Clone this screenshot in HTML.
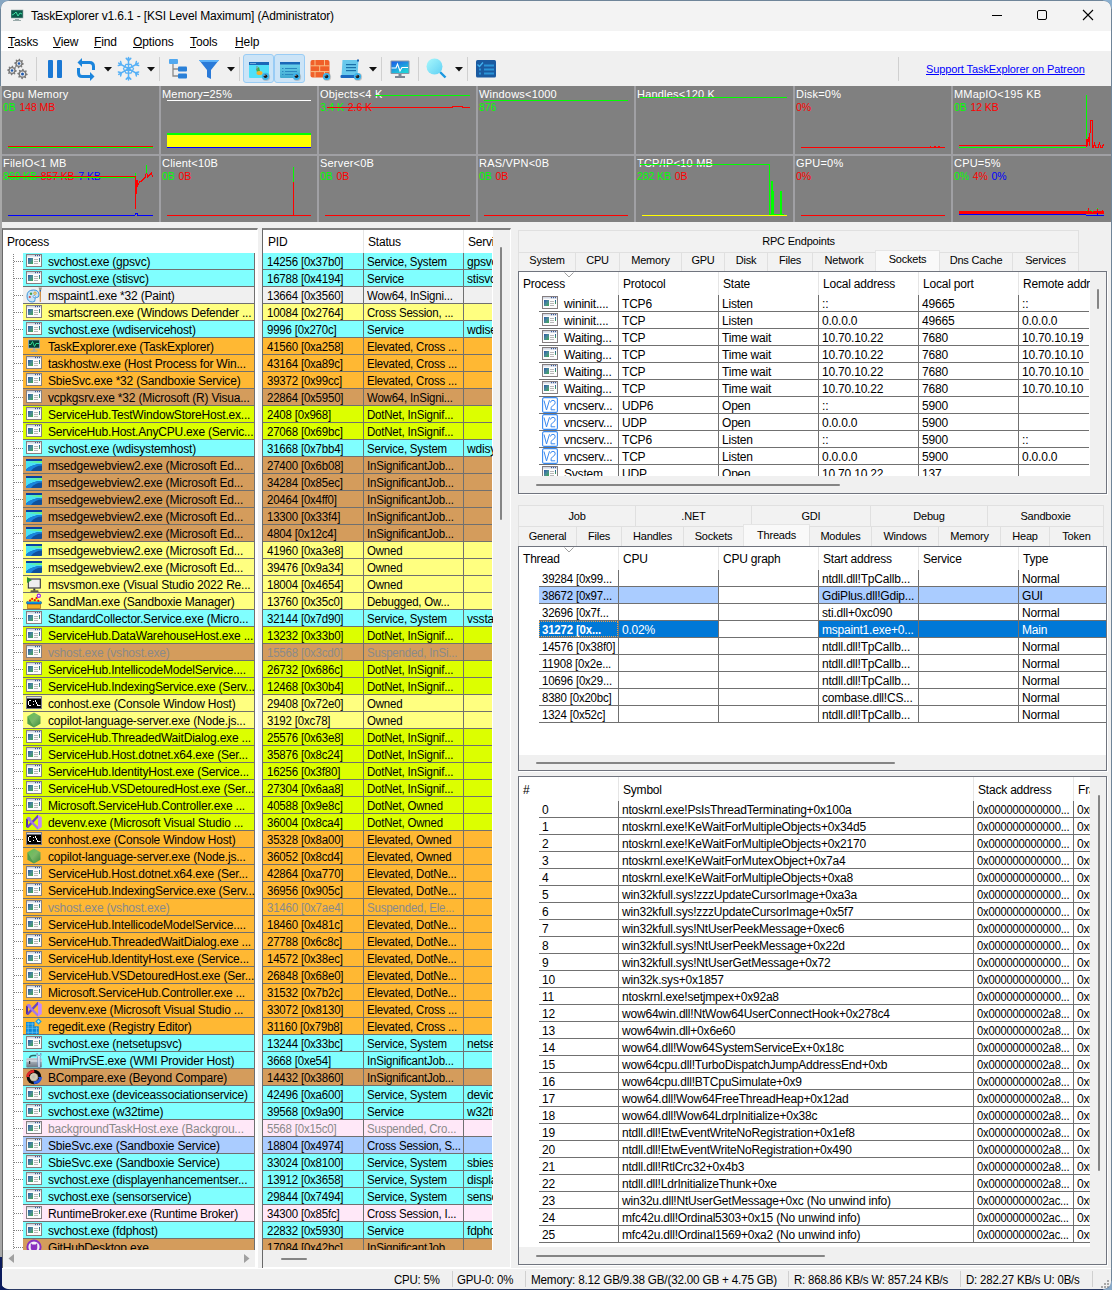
<!DOCTYPE html><html><head><meta charset="utf-8"><style>
*{box-sizing:border-box;margin:0;padding:0}
html,body{width:1112px;height:1290px;overflow:hidden;background:#f0f0f0;font-family:"Liberation Sans",sans-serif;font-size:12px;letter-spacing:-0.2px;color:#000}
.a{position:absolute}
.t{position:absolute;white-space:nowrap;line-height:18px}
.row{position:absolute;height:17px;border-bottom:1px solid #707070;overflow:hidden}
.cell{position:absolute;top:0;height:16px;line-height:16px;white-space:nowrap;overflow:hidden;padding-left:4px}
.gl{position:absolute;top:0;width:1px;height:17px;background:#707070}
.hdr{position:absolute;line-height:16px;white-space:nowrap}
.gray{color:#8a8a8a}
.gc{position:absolute;background:#808080;overflow:hidden}
.gt{position:absolute;left:1px;top:2px;color:#fff;font-size:11px;letter-spacing:0.2px;line-height:13px;white-space:nowrap}
.gv{position:absolute;left:1px;top:15px;font-size:10.5px;letter-spacing:-0.1px;line-height:13px;white-space:nowrap}
.tab{position:absolute;height:19px;background:#f2f2f2;border:1px solid #e0e0e0;border-bottom:none;text-align:center;line-height:18px;white-space:nowrap;font-size:11px;letter-spacing:-0.2px}
.tab.sel{background:#f9f9f9;border-color:#e5e5e5;height:21px}
.frame{position:absolute;background:#fff;border:1px solid #70747e;box-shadow:1px 1px 0 #fff;overflow:hidden}
.sb{position:absolute;background:#f0f0f0}
.thumb{position:absolute;background:#858585;border-radius:1px}
u{text-decoration:underline}
.sx{transform:scaleX(0.955);transform-origin:0 0}
.sx9{transform:scaleX(0.93);transform-origin:0 0}
</style></head><body>
<svg width="0" height="0" style="position:absolute"><defs>
<linearGradient id="gapp" x1="0" y1="0" x2="1" y2="1"><stop offset="0" stop-color="#2a58a8"/><stop offset="0.5" stop-color="#4a8a98"/><stop offset="1" stop-color="#40a850"/></linearGradient><linearGradient id="gbar" x1="0" y1="0" x2="0" y2="1"><stop offset="0" stop-color="#2a58a8"/><stop offset="1" stop-color="#40a850"/></linearGradient>
<symbol id="i-app" viewBox="0 0 16 13"><rect x="0.5" y="0.5" width="15" height="12" fill="#fcfcfc" stroke="#857e80"/><rect x="1" y="1" width="14" height="1.6" fill="#d4dae4"/><rect x="11" y="1" width="1" height="1.2" fill="#3a5a9a"/><rect x="13" y="1" width="1" height="1.2" fill="#3a5a9a"/><rect x="9" y="1" width="1" height="1.2" fill="#3a5a9a"/><rect x="2" y="4" width="5" height="6" fill="url(#gapp)"/><rect x="8" y="5" width="4" height="1" fill="#b8b8b8"/><rect x="8" y="7" width="4" height="1" fill="#b8b8b8"/><rect x="8" y="9" width="4" height="1" fill="#b8b8b8"/><rect x="13" y="4" width="1" height="4" fill="url(#gbar)"/></symbol>
<symbol id="i-tex" viewBox="0 0 16 16"><rect x="2" y="1.5" width="12" height="9" rx="0.6" fill="#a8b8c8"/><rect x="2.8" y="2.3" width="10.4" height="7.4" fill="#083f33"/><polyline points="3,6.5 5,6.5 6.5,3.5 8.5,8.5 10,5.5 13,5.5" fill="none" stroke="#30d890" stroke-width="1"/><rect x="7" y="10.5" width="2" height="2" fill="#9aaab8"/><rect x="4.5" y="12.5" width="7" height="1.2" fill="#9aaab8"/></symbol>
<symbol id="i-paint" viewBox="0 0 16 16"><path d="M7.5 3 Q13 3 13 8 Q13 10.5 10.5 10.5 Q8.5 10.5 9 12.5 Q9.5 15 6.5 15 Q1 15 1 9 Q1 3 7.5 3 Z" fill="#c8e4f8" stroke="#3a94dc" stroke-width="1"/><circle cx="5" cy="6.8" r="1.2" fill="#40a050"/><circle cx="9" cy="6.2" r="1.2" fill="none" stroke="#e0a020" stroke-width="0.9"/><circle cx="3.8" cy="10" r="1.1" fill="#d04848"/><circle cx="8.2" cy="9.6" r="1.1" fill="#fff" stroke="#2a80d0" stroke-width="0.6"/><path d="M13.6 4 L15 4 L14.8 15 L13.8 15 Z" fill="#d08838"/><path d="M12.5 0.5 L16 0.5 L15 3.5 L13.5 3.5 Z" fill="#9a9888"/><rect x="13.6" y="3" width="1.4" height="1.5" fill="#2a6ab0"/></symbol>
<linearGradient id="gedge" x1="0" y1="0" x2="1" y2="0"><stop offset="0" stop-color="#40e8fc"/><stop offset="1" stop-color="#70f070"/></linearGradient>
<symbol id="i-edge" viewBox="0 0 16 16"><rect x="0" y="2" width="16" height="12" rx="0.8" fill="#10509c"/><rect x="0" y="2" width="16" height="2" fill="#0a40a0"/><rect x="0" y="4" width="16" height="2" fill="url(#gedge)"/><path d="M0 6 L16 6 L16 7 Q6 7 0 12.5 Z" fill="#48e0f6"/><path d="M0 12.5 Q6 7 16 7 L16 8.5 Q9 8.5 5 14 L0 14 Z" fill="#1a84dc"/></symbol>
<symbol id="i-vsmon" viewBox="0 0 16 16"><rect x="1.5" y="2" width="13.5" height="10.5" fill="#fff"/><rect x="2.3" y="3" width="12" height="9" fill="#eeeef0" stroke="#303030" stroke-width="1.1"/><rect x="7.3" y="12.5" width="2" height="2" fill="#383838"/><rect x="4.5" y="14.5" width="8" height="1.2" rx="0.5" fill="#303030"/><path d="M1 1 L6 4 L1 7 Z" fill="#2a9030"/></symbol>
<symbol id="i-sandman" viewBox="0 0 16 16"><rect x="1.5" y="10.8" width="13" height="4.8" fill="#f8b020" stroke="#a86a20" stroke-width="0.7"/><rect x="0.5" y="8.6" width="15" height="2.3" rx="1" fill="#0a9ae8" stroke="#0a3a90" stroke-width="0.6"/><path d="M2 8.6 L5 5 L8 6.5 L11 4 L14 8.6 Z" fill="#f0f020"/><g fill="#f01010"><circle cx="4" cy="7.6" r="1.1"/><circle cx="6.2" cy="5.8" r="1.1"/><circle cx="8.8" cy="7.2" r="1.1"/><circle cx="10.5" cy="5" r="1.1"/><circle cx="12.3" cy="7.8" r="1.1"/></g><circle cx="12.8" cy="2.8" r="1.6" fill="#fff" stroke="#a020f0" stroke-width="1.2"/></symbol>
<symbol id="i-con" viewBox="0 0 16 16"><rect x="0.5" y="1.5" width="15" height="12" fill="#000" stroke="#7a7a8a"/><rect x="1" y="2" width="14" height="1.5" fill="#d8dce4"/><g fill="#fff"><rect x="2" y="6" width="1" height="4"/><rect x="3" y="5" width="2" height="1"/><rect x="3" y="10" width="2" height="1"/><rect x="7" y="6" width="1" height="1"/><rect x="7" y="9" width="1" height="1"/><rect x="9" y="5" width="1" height="2"/><rect x="10" y="7" width="1" height="2"/><rect x="11" y="9" width="1" height="2"/><rect x="12" y="10" width="2.5" height="1"/></g></symbol>
<linearGradient id="gnode" x1="0" y1="0" x2="1" y2="1"><stop offset="0" stop-color="#60c050"/><stop offset="0.5" stop-color="#7ab868"/><stop offset="1" stop-color="#3a8a3a"/></linearGradient>
<symbol id="i-node" viewBox="0 0 16 16"><path d="M8 0.5 L14.5 4.2 L14.5 11.8 L8 15.5 L1.5 11.8 L1.5 4.2 Z" fill="url(#gnode)"/><path d="M1.5 4.2 L8 15.5 L1.5 11.8 Z" fill="#3a8a3a" opacity="0.6"/></symbol>
<symbol id="i-vs" viewBox="0 0 16 16"><path d="M0 5 L2 4 L2 14 L0 13 Z" fill="#5030a0"/><path d="M1.5 13.2 L12.5 1.5" stroke="#6a44c4" stroke-width="2.4"/><path d="M2 4.5 L12.5 15" stroke="#a478e8" stroke-width="2.4"/><path d="M1 4.2 L3 3.6 L5 5.5" stroke="#a478e8" stroke-width="1.6" fill="none"/><path d="M12 0.8 L15.8 3.2 L15.8 13 L12 15.6 Z" fill="#c488fa"/></symbol>
<symbol id="i-reg" viewBox="0 0 16 16"><g fill="#0a88d8"><rect x="0" y="4" width="8.5" height="4.3"/><rect x="0" y="8.3" width="12.8" height="8"/></g><g stroke="#70c8f8" stroke-width="0.7" fill="none"><path d="M0.5 6 L8 6 M0.5 10.3 L12.3 10.3 M0.5 14.3 L12.3 14.3 M2.2 4.5 L2.2 15.8 M6.3 4.5 L6.3 15.8 M10.5 8.8 L10.5 15.8"/></g><path d="M12.5 0.3 L15.7 3.5 L12.5 6.7 L9.3 3.5 Z" fill="#1aa0e8"/><path d="M12.5 2 L14 3.5 L12.5 5 L11 3.5 Z" fill="#a0e8ff"/></symbol>
<linearGradient id="gwmi" x1="0" y1="0" x2="0" y2="1"><stop offset="0" stop-color="#c8d0d8"/><stop offset="1" stop-color="#6a7480"/></linearGradient>
<symbol id="i-wmi" viewBox="0 0 16 16"><path d="M3.5 6 Q4 3.5 7 3.5 L10 3.5" stroke="#2a6a6a" stroke-width="1.3" fill="none"/><rect x="0.3" y="6" width="15.5" height="9.5" rx="1" fill="url(#gwmi)"/><rect x="0.3" y="8.5" width="15.5" height="1" fill="#e8eef4"/><rect x="3" y="9" width="1.2" height="3" fill="#333"/><path d="M11 1 Q10 3 11.5 5 L12 15.5 L14 15.5 L14.2 5 Q15.8 3 14.8 1 L14 3.5 L12 3.5 Z" fill="#dfe8f4" stroke="#5070a8" stroke-width="0.5"/></symbol>
<radialGradient id="gbc" cx="0.45" cy="0.45" r="0.6"><stop offset="0" stop-color="#b8b8b0"/><stop offset="0.6" stop-color="#d8d0b8"/><stop offset="1" stop-color="#807868"/></radialGradient>
<symbol id="i-bc" viewBox="0 0 16 16"><circle cx="8" cy="8" r="7.3" fill="#0a0a0a"/><circle cx="8" cy="8.3" r="4.3" fill="url(#gbc)"/><path d="M0.5 5.5 Q2.5 1 8 1 L8.5 3.5 Q4.5 3.5 3 6.5 L4 8 L0 8 Z" fill="#e02828"/><path d="M15.5 10.5 Q13.5 15 8 15 L7.5 12.5 Q11.5 12.5 13 9.5 L12 8 L16 8 Z" fill="#2858e0"/></symbol>
<symbol id="i-gh" viewBox="0 0 16 16"><circle cx="8" cy="8" r="7.6" fill="#8a30c0"/><circle cx="8" cy="8" r="5.6" fill="#f4f0f8"/><path d="M4.8 4 L6.3 5.6 L9.7 5.6 L11.2 4 L11.3 8.5 Q11.3 11.8 8 11.8 Q4.7 11.8 4.7 8.5 Z" fill="#8a30c0"/></symbol>
<symbol id="i-vnc" viewBox="0 0 16 16"><rect x="0.6" y="0.6" width="14.8" height="14.8" rx="1.5" fill="#fff" stroke="#3a8af0" stroke-width="1.1"/><path d="M2 3.5 L4.5 13 L7.5 3.2 M8.5 5.5 Q8.8 3.3 11 3.3 Q13.2 3.3 13.2 5.8 Q13.2 7.5 10.5 8.8 Q8.8 9.8 9 12.8 L13.2 12.8" fill="none" stroke="#3a8af0" stroke-width="1"/></symbol>
</defs></svg>
<div class="a" style="left:0;top:0;width:1112px;height:31px;background:#f3f3f3"></div>
<div class="a" style="left:0;top:31px;width:1112px;height:20px;background:#fff"></div>
<svg class="a" style="left:11px;top:9px" width="13" height="13" viewBox="0 0 13 13"><rect x="0" y="1" width="12" height="8" fill="#0c5a4a" stroke="#9aa" stroke-width="0.6"/><polyline points="1,6 3,5 5,3 7,7 9,4 11,5" fill="none" stroke="#40e0a0" stroke-width="1"/><rect x="4" y="10" width="4" height="1" fill="#9aa"/><rect x="2" y="11" width="8" height="1" fill="#9aa"/></svg>
<div class="t" style="left:31px;top:7px;font-size:12px;letter-spacing:-0.15px">TaskExplorer v1.6.1 - [KSI Level Maximum] (Administrator)</div>
<div class="a" style="left:992px;top:15px;width:10px;height:1px;background:#000"></div>
<div class="a" style="left:1037px;top:10px;width:10px;height:10px;border:1px solid #000;border-radius:2px"></div>
<svg class="a" style="left:1082px;top:9px" width="12" height="12"><path d="M1 1 L11 11 M11 1 L1 11" stroke="#000" stroke-width="1.1"/></svg>
<div class="t" style="left:8px;top:33px;font-size:12px;letter-spacing:-0.1px"><u>T</u>asks</div>
<div class="t" style="left:53px;top:33px;font-size:12px;letter-spacing:-0.1px"><u>V</u>iew</div>
<div class="t" style="left:94px;top:33px;font-size:12px;letter-spacing:-0.1px"><u>F</u>ind</div>
<div class="t" style="left:133px;top:33px;font-size:12px;letter-spacing:-0.1px"><u>O</u>ptions</div>
<div class="t" style="left:190px;top:33px;font-size:12px;letter-spacing:-0.1px"><u>T</u>ools</div>
<div class="t" style="left:235px;top:33px;font-size:12px;letter-spacing:-0.1px"><u>H</u>elp</div>
<div class="a" style="left:0;top:0;width:1112px;height:1290px;border:1px solid #6f8599;border-bottom-color:#2a3a64;border-radius:8px 8px 8px 8px;pointer-events:none;z-index:50"></div>
<svg class="a" style="left:0;top:0;z-index:60" width="9" height="9"><path d="M0 0 L9 0 L9 0.5 A8.5 8.5 0 0 0 0.5 9 L0 9 Z" fill="#86a6c2"/></svg>
<svg class="a" style="left:1103px;top:0;z-index:60" width="9" height="9"><path d="M9 0 L0 0 L0 0.5 A8.5 8.5 0 0 1 8.5 9 L9 9 Z" fill="#8ab0d0"/></svg>
<svg class="a" style="left:0;top:1281px;z-index:60" width="9" height="9"><path d="M0 9 L9 9 L9 8.5 A8.5 8.5 0 0 1 0.5 0 L0 0 Z" fill="#0a1a5c"/></svg>
<svg class="a" style="left:1103px;top:1281px;z-index:60" width="9" height="9"><path d="M9 9 L0 9 L0 8.5 A8.5 8.5 0 0 0 8.5 0 L9 0 Z" fill="#86a8c8"/></svg>
<div class="a" style="left:0;top:86px;width:2px;height:1171px;background:#a8a8a8;z-index:55"></div>
<div class="a" style="left:0;top:1257px;width:2px;height:33px;background:#0a1a5c;z-index:55"></div>
<svg class="a" style="left:6px;top:58px" width="24" height="23" viewBox="0 0 24 23">
<g fill="#7a7a7a"><polygon points="17.80,5.50 17.71,6.44 16.33,6.88 15.99,7.50 16.39,8.89 15.67,9.49 14.38,8.83 13.70,9.03 13.00,10.30 12.06,10.21 11.62,8.83 11.00,8.49 9.61,8.89 9.01,8.17 9.67,6.88 9.47,6.20 8.20,5.50 8.29,4.56 9.67,4.12 10.01,3.50 9.61,2.11 10.33,1.51 11.62,2.17 12.30,1.97 13.00,0.70 13.94,0.79 14.38,2.17 15.00,2.51 16.39,2.11 16.99,2.83 16.33,4.12 16.53,4.80"/><polygon points="10.80,12.50 10.71,13.44 9.33,13.88 8.99,14.50 9.39,15.89 8.67,16.49 7.38,15.83 6.70,16.03 6.00,17.30 5.06,17.21 4.62,15.83 4.00,15.49 2.61,15.89 2.01,15.17 2.67,13.88 2.47,13.20 1.20,12.50 1.29,11.56 2.67,11.12 3.01,10.50 2.61,9.11 3.33,8.51 4.62,9.17 5.30,8.97 6.00,7.70 6.94,7.79 7.38,9.17 8.00,9.51 9.39,9.11 9.99,9.83 9.33,11.12 9.53,11.80"/><polygon points="21.70,16.00 21.60,17.01 20.10,17.49 19.74,18.17 20.18,19.68 19.39,20.32 17.99,19.60 17.26,19.83 16.50,21.20 15.49,21.10 15.01,19.60 14.33,19.24 12.82,19.68 12.18,18.89 12.90,17.49 12.67,16.76 11.30,16.00 11.40,14.99 12.90,14.51 13.26,13.83 12.82,12.32 13.61,11.68 15.01,12.40 15.74,12.17 16.50,10.80 17.51,10.90 17.99,12.40 18.67,12.76 20.18,12.32 20.82,13.11 20.10,14.51 20.33,15.24"/></g>
<g fill="#f0f0f0"><circle cx="13" cy="5.5" r="2.2"/><circle cx="6" cy="12.5" r="2.2"/><circle cx="16.5" cy="16" r="2.5"/></g>
<g fill="#1e5ab0"><circle cx="13" cy="5.5" r="1.3"/><circle cx="6" cy="12.5" r="1.3"/><circle cx="16.5" cy="16" r="1.5"/></g></svg>
<div class="a" style="left:36px;top:57px;width:1px;height:24px;background:#d0d0d0"></div>
<div class="a" style="left:48px;top:60px;width:5px;height:18px;background:#1a78d4;border-radius:1px"></div><div class="a" style="left:57px;top:60px;width:5px;height:18px;background:#1a78d4;border-radius:1px"></div>
<svg class="a" style="left:76px;top:57px" width="20" height="24" viewBox="0 0 20 24"><g fill="none" stroke="#1a84dc" stroke-width="3"><path d="M4 5.5 L13.5 5.5 Q17.5 5.5 17.5 9.5 L17.5 13"/><path d="M15 19.5 L6 19.5 Q2.5 19.5 2.5 15.5 L2.5 11"/></g><path d="M1.5 5.5 L6 1 L6 10 Z" fill="#1a84dc"/><path d="M18.5 19.5 L14 15 L14 24 Z" fill="#1a84dc"/></svg>
<svg class="a" style="left:104px;top:67px" width="8" height="5"><path d="M0 0 L8 0 L4 4.5 Z" fill="#111"/></svg>
<svg class="a" style="left:117px;top:56px" width="24" height="26" viewBox="0 0 24 26"><g stroke="#56b0f6" stroke-width="1.5" fill="none" stroke-linecap="round"><path d="M11.50 12.75 L11.50 1.45 M11.50 4.61 L13.76 2.35 M11.50 4.61 L9.24 2.35 M11.50 12.75 L1.71 7.10 M4.45 8.68 L3.63 5.59 M4.45 8.68 L1.36 9.51 M11.50 12.75 L1.71 18.40 M4.45 16.82 L1.36 15.99 M4.45 16.82 L3.63 19.91 M11.50 12.75 L11.50 24.05 M11.50 20.89 L9.24 23.15 M11.50 20.89 L13.76 23.15 M11.50 12.75 L21.29 18.40 M18.55 16.82 L19.37 19.91 M18.55 16.82 L21.64 15.99 M11.50 12.75 L21.29 7.10 M18.55 8.68 L21.64 9.51 M18.55 8.68 L19.37 5.59"/><polygon points="16.50,12.75 14.00,8.42 9.00,8.42 6.50,12.75 9.00,17.08 14.00,17.08" stroke-width="1.2"/></g><circle cx="11.5" cy="12.75" r="1.6" fill="#56b0f6"/></svg>
<svg class="a" style="left:147px;top:67px" width="8" height="5"><path d="M0 0 L8 0 L4 4.5 Z" fill="#111"/></svg>
<div class="a" style="left:159px;top:57px;width:1px;height:24px;background:#d0d0d0"></div>
<svg class="a" style="left:168px;top:58px" width="20" height="22" viewBox="0 0 20 22"><path d="M5 5 L5 18 L11 18 M5 11 L11 11" fill="none" stroke="#8a8a8a" stroke-width="1.3"/><rect x="1" y="1" width="9" height="5" rx="1" fill="#50a8f0"/><rect x="10" y="8.5" width="9" height="5" rx="1" fill="#2a80d8"/><rect x="10" y="15.5" width="9" height="5" rx="1" fill="#2a80d8"/></svg>
<svg class="a" style="left:198px;top:59px" width="22" height="21" viewBox="0 0 22 21"><path d="M1 1 L21 1 L13 11 L13 20 L9 18 L9 11 Z" fill="#2a7ad8"/><path d="M1 1 L21 1 L19.5 3 L2.5 3 Z" fill="#5ab0f8"/></svg>
<svg class="a" style="left:227px;top:67px" width="8" height="5"><path d="M0 0 L8 0 L4 4.5 Z" fill="#111"/></svg>
<div class="a" style="left:239px;top:57px;width:1px;height:24px;background:#d0d0d0"></div>
<div class="a" style="left:243px;top:54px;width:31px;height:29px;background:#cce4f7;border:1px solid #99ccf5;border-radius:3px"></div>
<div class="a" style="left:274px;top:54px;width:31px;height:29px;background:#cce4f7;border:1px solid #99ccf5;border-radius:3px"></div>
<svg class="a" style="left:248px;top:61px" width="24" height="22" viewBox="0 0 24 22"><rect x="1" y="1" width="20" height="16" rx="1" fill="#50e0f8"/><rect x="1" y="1" width="20" height="3" fill="#1a68b8"/><g fill="#cfe8ff"><rect x="2.5" y="2" width="1" height="1"/><rect x="4.5" y="2" width="1" height="1"/><rect x="6.5" y="2" width="1" height="1"/></g><path d="M8 8 L11 6 L12 10 L9 11 Z" fill="#40b040"/><ellipse cx="11.5" cy="12" rx="3" ry="2" fill="#f0b030"/><rect x="8.5" y="5" width="1" height="4" fill="#888"/><circle cx="18.1" cy="15.9" r="4" fill="#9a9a9a" opacity="0.5"/><circle cx="17.5" cy="15.3" r="3.6" fill="#3cb4ec"/><circle cx="17.5" cy="15.3" r="1.8" fill="#1a1a1a"/><circle cx="16.9" cy="14.600000000000001" r="0.5" fill="#fff"/></svg>
<svg class="a" style="left:279px;top:61px" width="24" height="22" viewBox="0 0 24 22"><defs><linearGradient id="gw2" x1="0" y1="0" x2="0" y2="1"><stop offset="0" stop-color="#70d8f0"/><stop offset="1" stop-color="#40a8d0"/></linearGradient></defs><rect x="1" y="1" width="20" height="16" rx="1" fill="url(#gw2)"/><rect x="1" y="1" width="20" height="2.5" fill="#1a68b8"/><g fill="#2a88c0"><rect x="6" y="7" width="12" height="1"/><rect x="6" y="10" width="12" height="1"/><rect x="6" y="13" width="9" height="1"/><rect x="3" y="7" width="1.5" height="1"/><rect x="3" y="10" width="1.5" height="1"/><rect x="3" y="13" width="1.5" height="1"/></g><circle cx="18.1" cy="15.9" r="4" fill="#9a9a9a" opacity="0.5"/><circle cx="17.5" cy="15.3" r="3.6" fill="#3cb4ec"/><circle cx="17.5" cy="15.3" r="1.8" fill="#1a1a1a"/><circle cx="16.9" cy="14.600000000000001" r="0.5" fill="#fff"/></svg>
<svg class="a" style="left:310px;top:59px" width="24" height="23" viewBox="0 0 24 23"><rect x="0.5" y="1" width="19" height="17.5" rx="2" fill="#f0602a"/><g stroke="#f8c890" stroke-width="0.9"><path d="M0.5 6.8 L19.5 6.8 M0.5 12.6 L19.5 12.6 M5 1 L5 6.8 M14.5 1 L14.5 6.8 M9.7 6.8 L9.7 12.6 M5 12.6 L5 18.5 M14.5 12.6 L14.5 18.5"/></g><circle cx="17.1" cy="18.1" r="4" fill="#9a9a9a" opacity="0.5"/><circle cx="16.5" cy="17.5" r="3.6" fill="#3cb4ec"/><circle cx="16.5" cy="17.5" r="1.8" fill="#1a1a1a"/><circle cx="15.9" cy="16.8" r="0.5" fill="#fff"/></svg>
<svg class="a" style="left:340px;top:59px" width="24" height="23" viewBox="0 0 24 23"><path d="M2.5 1 L18.5 1 L17.5 17 L1.5 17 Z" fill="#68c8ec"/><rect x="17" y="0.5" width="2" height="2" fill="#1a60b0"/><rect x="0.5" y="16" width="15" height="3" rx="1" fill="#1a68c0"/><g fill="#1a70a8"><rect x="6" y="5" width="10" height="1.2"/><rect x="6" y="8" width="10" height="1.2"/><rect x="6" y="11" width="10" height="1.2"/></g><circle cx="18.1" cy="18.1" r="4" fill="#9a9a9a" opacity="0.5"/><circle cx="17.5" cy="17.5" r="3.6" fill="#3cb4ec"/><circle cx="17.5" cy="17.5" r="1.8" fill="#1a1a1a"/><circle cx="16.9" cy="16.8" r="0.5" fill="#fff"/></svg>
<svg class="a" style="left:369px;top:67px" width="8" height="5"><path d="M0 0 L8 0 L4 4.5 Z" fill="#111"/></svg>
<div class="a" style="left:381px;top:57px;width:1px;height:24px;background:#d0d0d0"></div>
<svg class="a" style="left:390px;top:60px" width="20" height="19" viewBox="0 0 20 19"><defs><linearGradient id="gmon" x1="0" y1="0" x2="0.6" y2="1"><stop offset="0" stop-color="#1a5ae8"/><stop offset="1" stop-color="#20d0d8"/></linearGradient></defs><rect x="0.5" y="0.5" width="19" height="13.5" rx="1" fill="#8a96a4"/><rect x="1.5" y="1.5" width="17" height="11.5" fill="url(#gmon)"/><polyline points="1.5,8 6,8 7.5,4 10,11 12,7.5 18,7.5" fill="none" stroke="#fff" stroke-width="1.1"/><rect x="8.5" y="14" width="3" height="2" fill="#7a8694"/><rect x="5" y="16" width="10" height="2" fill="#7a8694"/></svg>
<div class="a" style="left:418px;top:57px;width:1px;height:24px;background:#d0d0d0"></div>
<svg class="a" style="left:426px;top:58px" width="22" height="22" viewBox="0 0 22 22"><defs><linearGradient id="gmag" x1="0" y1="0" x2="1" y2="1"><stop offset="0" stop-color="#a8f8fc"/><stop offset="1" stop-color="#60d0f4"/></linearGradient></defs><path d="M14 14 L19.5 19.5" stroke="#1a98e0" stroke-width="2.4"/><circle cx="8.5" cy="8.5" r="8" fill="url(#gmag)"/></svg>
<svg class="a" style="left:455px;top:67px" width="8" height="5"><path d="M0 0 L8 0 L4 4.5 Z" fill="#111"/></svg>
<div class="a" style="left:467px;top:57px;width:1px;height:24px;background:#d0d0d0"></div>
<svg class="a" style="left:476px;top:60px" width="20" height="18" viewBox="0 0 20 18"><rect x="0" y="0" width="20" height="17.5" rx="1.5" fill="#1a5aa0"/><g fill="#2a94d8"><rect x="8" y="4.5" width="10" height="2"/><rect x="8" y="8.5" width="10" height="2"/><rect x="8" y="12.5" width="10" height="2"/><rect x="3" y="8.5" width="2" height="2"/><rect x="3" y="12.5" width="2" height="2"/></g><path d="M1.5 4.5 L3.5 6.5 L7 2.5" fill="none" stroke="#40b0f0" stroke-width="1.3"/></svg>
<div class="a" style="left:898px;top:57px;width:1px;height:24px;background:#d0d0d0"></div>
<div class="t" style="left:926px;top:60px;font-size:11px;color:#0000ff;text-decoration:underline;letter-spacing:-0.1px">Support TaskExplorer on Patreon</div>
<div class="a" style="left:0;top:86px;width:1112px;height:136px;background:#a0a0a4"></div>
<div class="gc" style="left:2px;top:86px;width:157px;height:68px">
<div class="gt" style="top:2px">Gpu Memory</div>
<div class="gv" style="top:15px"><span style="color:#00ff00;margin-right:1px">0B </span><span style="color:#ff0000;margin-right:1px">148 MB</span></div>
</div>
<div class="gc" style="left:161px;top:86px;width:156px;height:68px">
<div class="gt" style="top:2px">Memory=25%</div>
</div>
<div class="gc" style="left:319px;top:86px;width:157px;height:68px">
<div class="gt" style="top:2px">Objects&lt;4 K</div>
<div class="gv" style="top:15px"><span style="color:#00ff00;margin-right:1px">3.4 K </span><span style="color:#ff0000;margin-right:1px">2.6 K</span></div>
</div>
<div class="gc" style="left:478px;top:86px;width:156px;height:68px">
<div class="gt" style="top:2px">Windows&lt;1000</div>
<div class="gv" style="top:15px"><span style="color:#00ff00;margin-right:1px">876</span></div>
</div>
<div class="gc" style="left:636px;top:86px;width:157px;height:68px">
<div class="gt" style="top:2px">Handles&lt;120 K</div>
</div>
<div class="gc" style="left:795px;top:86px;width:156px;height:68px">
<div class="gt" style="top:2px">Disk=0%</div>
<div class="gv" style="top:15px"><span style="color:#ff0000;margin-right:1px">0%</span></div>
</div>
<div class="gc" style="left:953px;top:86px;width:158px;height:68px">
<div class="gt" style="top:2px">MMapIO&lt;195 KB</div>
<div class="gv" style="top:15px"><span style="color:#00ff00;margin-right:1px">0B </span><span style="color:#ff0000;margin-right:1px">12 KB</span></div>
</div>
<div class="gc" style="left:2px;top:156px;width:157px;height:66px">
<div class="gt" style="top:1px">FileIO&lt;1 MB</div>
<div class="gv" style="top:14px"><span style="color:#00ff00;margin-right:1px">869 KB </span><span style="color:#ff0000;margin-right:1px">857 KB </span><span style="color:#0000ff;margin-right:1px">7 KB</span></div>
</div>
<div class="gc" style="left:161px;top:156px;width:156px;height:66px">
<div class="gt" style="top:1px">Client&lt;10B</div>
<div class="gv" style="top:14px"><span style="color:#00ff00;margin-right:1px">0B </span><span style="color:#ff0000;margin-right:1px">0B</span></div>
</div>
<div class="gc" style="left:319px;top:156px;width:157px;height:66px">
<div class="gt" style="top:1px">Server&lt;0B</div>
<div class="gv" style="top:14px"><span style="color:#00ff00;margin-right:1px">0B </span><span style="color:#ff0000;margin-right:1px">0B</span></div>
</div>
<div class="gc" style="left:478px;top:156px;width:156px;height:66px">
<div class="gt" style="top:1px">RAS/VPN&lt;0B</div>
<div class="gv" style="top:14px"><span style="color:#00ff00;margin-right:1px">0B </span><span style="color:#ff0000;margin-right:1px">0B</span></div>
</div>
<div class="gc" style="left:636px;top:156px;width:157px;height:66px">
<div class="gt" style="top:1px">TCP/IP&lt;10 MB</div>
<div class="gv" style="top:14px"><span style="color:#00ff00;margin-right:1px">282 KB </span><span style="color:#ff0000;margin-right:1px">0B</span></div>
</div>
<div class="gc" style="left:795px;top:156px;width:156px;height:66px">
<div class="gt" style="top:1px">GPU=0%</div>
<div class="gv" style="top:14px"><span style="color:#ff0000;margin-right:1px">0%</span></div>
</div>
<div class="gc" style="left:953px;top:156px;width:158px;height:66px">
<div class="gt" style="top:1px">CPU=5%</div>
<div class="gv" style="top:14px"><span style="color:#00ff00;margin-right:1px">0% </span><span style="color:#ff0000;margin-right:1px">4% </span><span style="color:#0000ff;margin-right:1px">0%</span></div>
</div>
<svg class="a" style="left:0;top:0" width="1112" height="230" shape-rendering="crispEdges">
<rect x="8" y="147" width="145" height="1" fill="#00ff00"/>
<rect x="8" y="146" width="145" height="1" fill="#ff0000"/>
<rect x="167" y="100" width="144" height="1" fill="#ffffff"/>
<rect x="167" y="133" width="144" height="14" fill="#ffff00"/>
<rect x="167" y="133" width="144" height="1" fill="#00ff00"/>
<rect x="167" y="134" width="144" height="1" fill="#00ff00"/>
<rect x="167" y="147" width="144" height="1" fill="#0000ff"/>
<rect x="375" y="95" width="95" height="1" fill="#00ff00"/>
<polyline points="327,107.5 452,107.5 453,106.5 462,106.5 463,107.5 470,107.5" fill="none" stroke="#ff0000" stroke-width="1"/>
<rect x="484" y="100" width="144" height="1" fill="#00ff00"/>
<rect x="640" y="97" width="147" height="1" fill="#00ff00"/>
<rect x="801" y="147" width="144" height="1" fill="#ff0000"/>
<rect x="930" y="146" width="1" height="1" fill="#ff0000"/><rect x="934" y="146" width="2" height="1" fill="#ff0000"/><rect x="938" y="146" width="2" height="1" fill="#ff0000"/>
<rect x="959" y="147" width="127" height="1" fill="#00ff00"/>
<rect x="959" y="145" width="127" height="1" fill="#ff0000"/>
<rect x="1086" y="95" width="1" height="52" fill="#00ff00"/>
<polyline points="1086.5,147 1086.5,139 1087.5,139 1087.5,146 1088.5,137 1089.5,146 1090.5,121 1091.5,120 1092.5,120 1092.5,147 1093.5,147 1094.5,144 1095.5,147 1098.5,147 1099.5,142 1100.5,147 1102.5,147 1103.5,144" fill="none" stroke="#ff0000" stroke-width="1"/>
<rect x="8" y="215" width="127" height="1" fill="#0000ff"/>
<rect x="137" y="215" width="16" height="1" fill="#0000ff"/>
<polyline points="135.5,215 135.5,213.5 137.5,213.5 137.5,215" fill="none" stroke="#0000ff" stroke-width="1"/>
<rect x="8" y="177" width="127" height="1" fill="#00ff00"/>
<rect x="8" y="176" width="127" height="1" fill="#ff0000"/>
<rect x="135" y="173" width="1" height="3" fill="#00ff00"/>
<polyline points="135.5,176 135.5,209 136.5,181 137.5,186 139.5,182 141.5,181 143.5,179 145.5,177 146.5,171 147.5,177 149.5,175 151.5,173 152.5,177" fill="none" stroke="#ff0000" stroke-width="1"/>
<rect x="136" y="180" width="2" height="6" fill="#ff0000"/><rect x="146" y="165" width="1" height="8" fill="#00ff00"/>
<rect x="167" y="215" width="144" height="1" fill="#ff0000"/>
<rect x="293" y="182" width="1" height="33" fill="#ff0000"/>
<rect x="293" y="167" width="1" height="15" fill="#00ff00"/>
<rect x="325" y="215" width="145" height="1" fill="#ff0000"/>
<rect x="484" y="215" width="144" height="1" fill="#ff0000"/>
<polyline points="640,164.5 769.5,164.5 769.5,215" fill="none" stroke="#00ff00" stroke-width="1"/>
<rect x="771" y="181" width="2" height="34" fill="#00ff00"/><rect x="773" y="191" width="1" height="24" fill="#00ff00"/><rect x="780" y="191" width="2" height="24" fill="#00ff00"/><rect x="770" y="214" width="14" height="1" fill="#00ff00"/>
<rect x="642" y="215" width="145" height="1" fill="#ffff00"/>
<rect x="801" y="215" width="144" height="1" fill="#ff0000"/>
<rect x="959" y="211" width="145" height="3" fill="#ff0000"/>
<rect x="959" y="214" width="127" height="1" fill="#0000ff"/>
<rect x="1086" y="215" width="18" height="1" fill="#0000ff"/>
<rect x="1088" y="208" width="1" height="3" fill="#ff0000"/><rect x="1097" y="208" width="1" height="3" fill="#ff0000"/><rect x="1102" y="210" width="1" height="2" fill="#ff0000"/><rect x="1087" y="210" width="1" height="1" fill="#00ff00"/><rect x="1090" y="210" width="1" height="1" fill="#00ff00"/><rect x="1092" y="211" width="1" height="1" fill="#00ff00"/><rect x="1097" y="208" width="1" height="1" fill="#00ff00"/><rect x="1097" y="213" width="1" height="2" fill="#0000ff"/>
</svg>
<div class="a" style="left:2px;top:228px;width:256px;height:1041px;border-top:2px solid #808080;border-left:1px solid #696969;border-right:1px solid #fff;border-bottom:1px solid #fff;background:#fff;overflow:hidden">
<div class="hdr" style="left:4px;top:4px">Process</div>
<div class="a" style="left:10px;top:24px;width:1px;height:996px;background:repeating-linear-gradient(#808080 0 1px,transparent 1px 2px)"></div>
<div class="a" style="left:11px;top:31px;width:9px;height:1px;background:repeating-linear-gradient(90deg,#808080 0 1px,transparent 1px 2px)"></div>
<div class="row" style="left:20px;top:23px;width:232px;background:#80ffff"></div>
<div class="gl" style="left:251px;top:23px"></div>
<svg class="a" style="left:23px;top:24px" width="16" height="13"><use href="#i-app"/></svg>
<div class="t" style="left:45px;top:23px">svchost.exe (gpsvc)</div>
<div class="a" style="left:11px;top:48px;width:9px;height:1px;background:repeating-linear-gradient(90deg,#808080 0 1px,transparent 1px 2px)"></div>
<div class="row" style="left:20px;top:40px;width:232px;background:#80ffff"></div>
<div class="gl" style="left:251px;top:40px"></div>
<svg class="a" style="left:23px;top:41px" width="16" height="13"><use href="#i-app"/></svg>
<div class="t" style="left:45px;top:40px">svchost.exe (stisvc)</div>
<div class="a" style="left:11px;top:65px;width:9px;height:1px;background:repeating-linear-gradient(90deg,#808080 0 1px,transparent 1px 2px)"></div>
<div class="row" style="left:20px;top:57px;width:232px;background:#f0f0f0"></div>
<div class="gl" style="left:251px;top:57px"></div>
<svg class="a" style="left:23px;top:57px" width="16" height="16"><use href="#i-paint"/></svg>
<div class="t" style="left:45px;top:57px">mspaint1.exe *32 (Paint)</div>
<div class="a" style="left:11px;top:82px;width:9px;height:1px;background:repeating-linear-gradient(90deg,#808080 0 1px,transparent 1px 2px)"></div>
<div class="row" style="left:20px;top:74px;width:232px;background:#ffff80"></div>
<div class="gl" style="left:251px;top:74px"></div>
<svg class="a" style="left:23px;top:75px" width="16" height="13"><use href="#i-app"/></svg>
<div class="t" style="left:45px;top:74px">smartscreen.exe (Windows Defender ...</div>
<div class="a" style="left:11px;top:99px;width:9px;height:1px;background:repeating-linear-gradient(90deg,#808080 0 1px,transparent 1px 2px)"></div>
<div class="row" style="left:20px;top:91px;width:232px;background:#80ffff"></div>
<div class="gl" style="left:251px;top:91px"></div>
<svg class="a" style="left:23px;top:92px" width="16" height="13"><use href="#i-app"/></svg>
<div class="t" style="left:45px;top:91px">svchost.exe (wdiservicehost)</div>
<div class="a" style="left:11px;top:116px;width:9px;height:1px;background:repeating-linear-gradient(90deg,#808080 0 1px,transparent 1px 2px)"></div>
<div class="row" style="left:20px;top:108px;width:232px;background:#ffb833"></div>
<div class="gl" style="left:251px;top:108px"></div>
<svg class="a" style="left:23px;top:108px" width="16" height="16"><use href="#i-tex"/></svg>
<div class="t" style="left:45px;top:108px">TaskExplorer.exe (TaskExplorer)</div>
<div class="a" style="left:11px;top:133px;width:9px;height:1px;background:repeating-linear-gradient(90deg,#808080 0 1px,transparent 1px 2px)"></div>
<div class="row" style="left:20px;top:125px;width:232px;background:#ffb833"></div>
<div class="gl" style="left:251px;top:125px"></div>
<svg class="a" style="left:23px;top:126px" width="16" height="13"><use href="#i-app"/></svg>
<div class="t" style="left:45px;top:125px">taskhostw.exe (Host Process for Win...</div>
<div class="a" style="left:11px;top:150px;width:9px;height:1px;background:repeating-linear-gradient(90deg,#808080 0 1px,transparent 1px 2px)"></div>
<div class="row" style="left:20px;top:142px;width:232px;background:#ffb833"></div>
<div class="gl" style="left:251px;top:142px"></div>
<svg class="a" style="left:23px;top:143px" width="16" height="13"><use href="#i-app"/></svg>
<div class="t" style="left:45px;top:142px">SbieSvc.exe *32 (Sandboxie Service)</div>
<div class="a" style="left:11px;top:167px;width:9px;height:1px;background:repeating-linear-gradient(90deg,#808080 0 1px,transparent 1px 2px)"></div>
<div class="row" style="left:20px;top:159px;width:232px;background:#d49c5c"></div>
<div class="gl" style="left:251px;top:159px"></div>
<svg class="a" style="left:23px;top:160px" width="16" height="13"><use href="#i-app"/></svg>
<div class="t" style="left:45px;top:159px">vcpkgsrv.exe *32 (Microsoft (R) Visua...</div>
<div class="a" style="left:11px;top:184px;width:9px;height:1px;background:repeating-linear-gradient(90deg,#808080 0 1px,transparent 1px 2px)"></div>
<div class="row" style="left:20px;top:176px;width:232px;background:#dcff00"></div>
<div class="gl" style="left:251px;top:176px"></div>
<svg class="a" style="left:23px;top:177px" width="16" height="13"><use href="#i-app"/></svg>
<div class="t" style="left:45px;top:176px">ServiceHub.TestWindowStoreHost.ex...</div>
<div class="a" style="left:11px;top:201px;width:9px;height:1px;background:repeating-linear-gradient(90deg,#808080 0 1px,transparent 1px 2px)"></div>
<div class="row" style="left:20px;top:193px;width:232px;background:#dcff00"></div>
<div class="gl" style="left:251px;top:193px"></div>
<svg class="a" style="left:23px;top:194px" width="16" height="13"><use href="#i-app"/></svg>
<div class="t" style="left:45px;top:193px">ServiceHub.Host.AnyCPU.exe (Servic...</div>
<div class="a" style="left:11px;top:218px;width:9px;height:1px;background:repeating-linear-gradient(90deg,#808080 0 1px,transparent 1px 2px)"></div>
<div class="row" style="left:20px;top:210px;width:232px;background:#80ffff"></div>
<div class="gl" style="left:251px;top:210px"></div>
<svg class="a" style="left:23px;top:211px" width="16" height="13"><use href="#i-app"/></svg>
<div class="t" style="left:45px;top:210px">svchost.exe (wdisystemhost)</div>
<div class="a" style="left:11px;top:235px;width:9px;height:1px;background:repeating-linear-gradient(90deg,#808080 0 1px,transparent 1px 2px)"></div>
<div class="row" style="left:20px;top:227px;width:232px;background:#d49c5c"></div>
<div class="gl" style="left:251px;top:227px"></div>
<svg class="a" style="left:23px;top:227px" width="16" height="16"><use href="#i-edge"/></svg>
<div class="t" style="left:45px;top:227px">msedgewebview2.exe (Microsoft Ed...</div>
<div class="a" style="left:11px;top:252px;width:9px;height:1px;background:repeating-linear-gradient(90deg,#808080 0 1px,transparent 1px 2px)"></div>
<div class="row" style="left:20px;top:244px;width:232px;background:#d49c5c"></div>
<div class="gl" style="left:251px;top:244px"></div>
<svg class="a" style="left:23px;top:244px" width="16" height="16"><use href="#i-edge"/></svg>
<div class="t" style="left:45px;top:244px">msedgewebview2.exe (Microsoft Ed...</div>
<div class="a" style="left:11px;top:269px;width:9px;height:1px;background:repeating-linear-gradient(90deg,#808080 0 1px,transparent 1px 2px)"></div>
<div class="row" style="left:20px;top:261px;width:232px;background:#d49c5c"></div>
<div class="gl" style="left:251px;top:261px"></div>
<svg class="a" style="left:23px;top:261px" width="16" height="16"><use href="#i-edge"/></svg>
<div class="t" style="left:45px;top:261px">msedgewebview2.exe (Microsoft Ed...</div>
<div class="a" style="left:11px;top:286px;width:9px;height:1px;background:repeating-linear-gradient(90deg,#808080 0 1px,transparent 1px 2px)"></div>
<div class="row" style="left:20px;top:278px;width:232px;background:#d49c5c"></div>
<div class="gl" style="left:251px;top:278px"></div>
<svg class="a" style="left:23px;top:278px" width="16" height="16"><use href="#i-edge"/></svg>
<div class="t" style="left:45px;top:278px">msedgewebview2.exe (Microsoft Ed...</div>
<div class="a" style="left:11px;top:303px;width:9px;height:1px;background:repeating-linear-gradient(90deg,#808080 0 1px,transparent 1px 2px)"></div>
<div class="row" style="left:20px;top:295px;width:232px;background:#d49c5c"></div>
<div class="gl" style="left:251px;top:295px"></div>
<svg class="a" style="left:23px;top:295px" width="16" height="16"><use href="#i-edge"/></svg>
<div class="t" style="left:45px;top:295px">msedgewebview2.exe (Microsoft Ed...</div>
<div class="a" style="left:11px;top:320px;width:9px;height:1px;background:repeating-linear-gradient(90deg,#808080 0 1px,transparent 1px 2px)"></div>
<div class="row" style="left:20px;top:312px;width:232px;background:#ffff80"></div>
<div class="gl" style="left:251px;top:312px"></div>
<svg class="a" style="left:23px;top:312px" width="16" height="16"><use href="#i-edge"/></svg>
<div class="t" style="left:45px;top:312px">msedgewebview2.exe (Microsoft Ed...</div>
<div class="a" style="left:11px;top:337px;width:9px;height:1px;background:repeating-linear-gradient(90deg,#808080 0 1px,transparent 1px 2px)"></div>
<div class="row" style="left:20px;top:329px;width:232px;background:#ffff80"></div>
<div class="gl" style="left:251px;top:329px"></div>
<svg class="a" style="left:23px;top:329px" width="16" height="16"><use href="#i-edge"/></svg>
<div class="t" style="left:45px;top:329px">msedgewebview2.exe (Microsoft Ed...</div>
<div class="a" style="left:11px;top:354px;width:9px;height:1px;background:repeating-linear-gradient(90deg,#808080 0 1px,transparent 1px 2px)"></div>
<div class="row" style="left:20px;top:346px;width:232px;background:#ffff80"></div>
<div class="gl" style="left:251px;top:346px"></div>
<svg class="a" style="left:23px;top:346px" width="16" height="16"><use href="#i-vsmon"/></svg>
<div class="t" style="left:45px;top:346px">msvsmon.exe (Visual Studio 2022 Re...</div>
<div class="a" style="left:11px;top:371px;width:9px;height:1px;background:repeating-linear-gradient(90deg,#808080 0 1px,transparent 1px 2px)"></div>
<div class="row" style="left:20px;top:363px;width:232px;background:#ffff80"></div>
<div class="gl" style="left:251px;top:363px"></div>
<svg class="a" style="left:23px;top:363px" width="16" height="16"><use href="#i-sandman"/></svg>
<div class="t" style="left:45px;top:363px">SandMan.exe (Sandboxie Manager)</div>
<div class="a" style="left:11px;top:388px;width:9px;height:1px;background:repeating-linear-gradient(90deg,#808080 0 1px,transparent 1px 2px)"></div>
<div class="row" style="left:20px;top:380px;width:232px;background:#80ffff"></div>
<div class="gl" style="left:251px;top:380px"></div>
<svg class="a" style="left:23px;top:381px" width="16" height="13"><use href="#i-app"/></svg>
<div class="t" style="left:45px;top:380px">StandardCollector.Service.exe (Micro...</div>
<div class="a" style="left:11px;top:405px;width:9px;height:1px;background:repeating-linear-gradient(90deg,#808080 0 1px,transparent 1px 2px)"></div>
<div class="row" style="left:20px;top:397px;width:232px;background:#dcff00"></div>
<div class="gl" style="left:251px;top:397px"></div>
<svg class="a" style="left:23px;top:398px" width="16" height="13"><use href="#i-app"/></svg>
<div class="t" style="left:45px;top:397px">ServiceHub.DataWarehouseHost.exe ...</div>
<div class="a" style="left:11px;top:422px;width:9px;height:1px;background:repeating-linear-gradient(90deg,#808080 0 1px,transparent 1px 2px)"></div>
<div class="row" style="left:20px;top:414px;width:232px;background:#d49c5c"></div>
<div class="gl" style="left:251px;top:414px"></div>
<svg class="a" style="left:23px;top:415px" width="16" height="13"><use href="#i-app"/></svg>
<div class="t gray" style="left:45px;top:414px">vshost.exe (vshost.exe)</div>
<div class="a" style="left:11px;top:439px;width:9px;height:1px;background:repeating-linear-gradient(90deg,#808080 0 1px,transparent 1px 2px)"></div>
<div class="row" style="left:20px;top:431px;width:232px;background:#dcff00"></div>
<div class="gl" style="left:251px;top:431px"></div>
<svg class="a" style="left:23px;top:432px" width="16" height="13"><use href="#i-app"/></svg>
<div class="t" style="left:45px;top:431px">ServiceHub.IntellicodeModelService....</div>
<div class="a" style="left:11px;top:456px;width:9px;height:1px;background:repeating-linear-gradient(90deg,#808080 0 1px,transparent 1px 2px)"></div>
<div class="row" style="left:20px;top:448px;width:232px;background:#dcff00"></div>
<div class="gl" style="left:251px;top:448px"></div>
<svg class="a" style="left:23px;top:449px" width="16" height="13"><use href="#i-app"/></svg>
<div class="t" style="left:45px;top:448px">ServiceHub.IndexingService.exe (Serv...</div>
<div class="a" style="left:11px;top:473px;width:9px;height:1px;background:repeating-linear-gradient(90deg,#808080 0 1px,transparent 1px 2px)"></div>
<div class="row" style="left:20px;top:465px;width:232px;background:#ffff80"></div>
<div class="gl" style="left:251px;top:465px"></div>
<svg class="a" style="left:23px;top:465px" width="16" height="16"><use href="#i-con"/></svg>
<div class="t" style="left:45px;top:465px">conhost.exe (Console Window Host)</div>
<div class="a" style="left:11px;top:490px;width:9px;height:1px;background:repeating-linear-gradient(90deg,#808080 0 1px,transparent 1px 2px)"></div>
<div class="row" style="left:20px;top:482px;width:232px;background:#ffff80"></div>
<div class="gl" style="left:251px;top:482px"></div>
<svg class="a" style="left:23px;top:482px" width="16" height="16"><use href="#i-node"/></svg>
<div class="t" style="left:45px;top:482px">copilot-language-server.exe (Node.js...</div>
<div class="a" style="left:11px;top:507px;width:9px;height:1px;background:repeating-linear-gradient(90deg,#808080 0 1px,transparent 1px 2px)"></div>
<div class="row" style="left:20px;top:499px;width:232px;background:#dcff00"></div>
<div class="gl" style="left:251px;top:499px"></div>
<svg class="a" style="left:23px;top:500px" width="16" height="13"><use href="#i-app"/></svg>
<div class="t" style="left:45px;top:499px">ServiceHub.ThreadedWaitDialog.exe ...</div>
<div class="a" style="left:11px;top:524px;width:9px;height:1px;background:repeating-linear-gradient(90deg,#808080 0 1px,transparent 1px 2px)"></div>
<div class="row" style="left:20px;top:516px;width:232px;background:#dcff00"></div>
<div class="gl" style="left:251px;top:516px"></div>
<svg class="a" style="left:23px;top:517px" width="16" height="13"><use href="#i-app"/></svg>
<div class="t" style="left:45px;top:516px">ServiceHub.Host.dotnet.x64.exe (Ser...</div>
<div class="a" style="left:11px;top:541px;width:9px;height:1px;background:repeating-linear-gradient(90deg,#808080 0 1px,transparent 1px 2px)"></div>
<div class="row" style="left:20px;top:533px;width:232px;background:#dcff00"></div>
<div class="gl" style="left:251px;top:533px"></div>
<svg class="a" style="left:23px;top:534px" width="16" height="13"><use href="#i-app"/></svg>
<div class="t" style="left:45px;top:533px">ServiceHub.IdentityHost.exe (Service...</div>
<div class="a" style="left:11px;top:558px;width:9px;height:1px;background:repeating-linear-gradient(90deg,#808080 0 1px,transparent 1px 2px)"></div>
<div class="row" style="left:20px;top:550px;width:232px;background:#dcff00"></div>
<div class="gl" style="left:251px;top:550px"></div>
<svg class="a" style="left:23px;top:551px" width="16" height="13"><use href="#i-app"/></svg>
<div class="t" style="left:45px;top:550px">ServiceHub.VSDetouredHost.exe (Ser...</div>
<div class="a" style="left:11px;top:575px;width:9px;height:1px;background:repeating-linear-gradient(90deg,#808080 0 1px,transparent 1px 2px)"></div>
<div class="row" style="left:20px;top:567px;width:232px;background:#dcff00"></div>
<div class="gl" style="left:251px;top:567px"></div>
<svg class="a" style="left:23px;top:568px" width="16" height="13"><use href="#i-app"/></svg>
<div class="t" style="left:45px;top:567px">Microsoft.ServiceHub.Controller.exe ...</div>
<div class="a" style="left:11px;top:592px;width:9px;height:1px;background:repeating-linear-gradient(90deg,#808080 0 1px,transparent 1px 2px)"></div>
<div class="row" style="left:20px;top:584px;width:232px;background:#dcff00"></div>
<div class="gl" style="left:251px;top:584px"></div>
<svg class="a" style="left:23px;top:584px" width="16" height="16"><use href="#i-vs"/></svg>
<div class="t" style="left:45px;top:584px">devenv.exe (Microsoft Visual Studio ...</div>
<div class="a" style="left:11px;top:609px;width:9px;height:1px;background:repeating-linear-gradient(90deg,#808080 0 1px,transparent 1px 2px)"></div>
<div class="row" style="left:20px;top:601px;width:232px;background:#ffb833"></div>
<div class="gl" style="left:251px;top:601px"></div>
<svg class="a" style="left:23px;top:601px" width="16" height="16"><use href="#i-con"/></svg>
<div class="t" style="left:45px;top:601px">conhost.exe (Console Window Host)</div>
<div class="a" style="left:11px;top:626px;width:9px;height:1px;background:repeating-linear-gradient(90deg,#808080 0 1px,transparent 1px 2px)"></div>
<div class="row" style="left:20px;top:618px;width:232px;background:#ffb833"></div>
<div class="gl" style="left:251px;top:618px"></div>
<svg class="a" style="left:23px;top:618px" width="16" height="16"><use href="#i-node"/></svg>
<div class="t" style="left:45px;top:618px">copilot-language-server.exe (Node.js...</div>
<div class="a" style="left:11px;top:643px;width:9px;height:1px;background:repeating-linear-gradient(90deg,#808080 0 1px,transparent 1px 2px)"></div>
<div class="row" style="left:20px;top:635px;width:232px;background:#ffb833"></div>
<div class="gl" style="left:251px;top:635px"></div>
<svg class="a" style="left:23px;top:636px" width="16" height="13"><use href="#i-app"/></svg>
<div class="t" style="left:45px;top:635px">ServiceHub.Host.dotnet.x64.exe (Ser...</div>
<div class="a" style="left:11px;top:660px;width:9px;height:1px;background:repeating-linear-gradient(90deg,#808080 0 1px,transparent 1px 2px)"></div>
<div class="row" style="left:20px;top:652px;width:232px;background:#ffb833"></div>
<div class="gl" style="left:251px;top:652px"></div>
<svg class="a" style="left:23px;top:653px" width="16" height="13"><use href="#i-app"/></svg>
<div class="t" style="left:45px;top:652px">ServiceHub.IndexingService.exe (Serv...</div>
<div class="a" style="left:11px;top:677px;width:9px;height:1px;background:repeating-linear-gradient(90deg,#808080 0 1px,transparent 1px 2px)"></div>
<div class="row" style="left:20px;top:669px;width:232px;background:#ffb833"></div>
<div class="gl" style="left:251px;top:669px"></div>
<svg class="a" style="left:23px;top:670px" width="16" height="13"><use href="#i-app"/></svg>
<div class="t gray" style="left:45px;top:669px">vshost.exe (vshost.exe)</div>
<div class="a" style="left:11px;top:694px;width:9px;height:1px;background:repeating-linear-gradient(90deg,#808080 0 1px,transparent 1px 2px)"></div>
<div class="row" style="left:20px;top:686px;width:232px;background:#ffb833"></div>
<div class="gl" style="left:251px;top:686px"></div>
<svg class="a" style="left:23px;top:687px" width="16" height="13"><use href="#i-app"/></svg>
<div class="t" style="left:45px;top:686px">ServiceHub.IntellicodeModelService....</div>
<div class="a" style="left:11px;top:711px;width:9px;height:1px;background:repeating-linear-gradient(90deg,#808080 0 1px,transparent 1px 2px)"></div>
<div class="row" style="left:20px;top:703px;width:232px;background:#ffb833"></div>
<div class="gl" style="left:251px;top:703px"></div>
<svg class="a" style="left:23px;top:704px" width="16" height="13"><use href="#i-app"/></svg>
<div class="t" style="left:45px;top:703px">ServiceHub.ThreadedWaitDialog.exe ...</div>
<div class="a" style="left:11px;top:728px;width:9px;height:1px;background:repeating-linear-gradient(90deg,#808080 0 1px,transparent 1px 2px)"></div>
<div class="row" style="left:20px;top:720px;width:232px;background:#ffb833"></div>
<div class="gl" style="left:251px;top:720px"></div>
<svg class="a" style="left:23px;top:721px" width="16" height="13"><use href="#i-app"/></svg>
<div class="t" style="left:45px;top:720px">ServiceHub.IdentityHost.exe (Service...</div>
<div class="a" style="left:11px;top:745px;width:9px;height:1px;background:repeating-linear-gradient(90deg,#808080 0 1px,transparent 1px 2px)"></div>
<div class="row" style="left:20px;top:737px;width:232px;background:#ffb833"></div>
<div class="gl" style="left:251px;top:737px"></div>
<svg class="a" style="left:23px;top:738px" width="16" height="13"><use href="#i-app"/></svg>
<div class="t" style="left:45px;top:737px">ServiceHub.VSDetouredHost.exe (Ser...</div>
<div class="a" style="left:11px;top:762px;width:9px;height:1px;background:repeating-linear-gradient(90deg,#808080 0 1px,transparent 1px 2px)"></div>
<div class="row" style="left:20px;top:754px;width:232px;background:#ffb833"></div>
<div class="gl" style="left:251px;top:754px"></div>
<svg class="a" style="left:23px;top:755px" width="16" height="13"><use href="#i-app"/></svg>
<div class="t" style="left:45px;top:754px">Microsoft.ServiceHub.Controller.exe ...</div>
<div class="a" style="left:11px;top:779px;width:9px;height:1px;background:repeating-linear-gradient(90deg,#808080 0 1px,transparent 1px 2px)"></div>
<div class="row" style="left:20px;top:771px;width:232px;background:#ffb833"></div>
<div class="gl" style="left:251px;top:771px"></div>
<svg class="a" style="left:23px;top:771px" width="16" height="16"><use href="#i-vs"/></svg>
<div class="t" style="left:45px;top:771px">devenv.exe (Microsoft Visual Studio ...</div>
<div class="a" style="left:11px;top:796px;width:9px;height:1px;background:repeating-linear-gradient(90deg,#808080 0 1px,transparent 1px 2px)"></div>
<div class="row" style="left:20px;top:788px;width:232px;background:#ffb833"></div>
<div class="gl" style="left:251px;top:788px"></div>
<svg class="a" style="left:23px;top:788px" width="16" height="16"><use href="#i-reg"/></svg>
<div class="t" style="left:45px;top:788px">regedit.exe (Registry Editor)</div>
<div class="a" style="left:11px;top:813px;width:9px;height:1px;background:repeating-linear-gradient(90deg,#808080 0 1px,transparent 1px 2px)"></div>
<div class="row" style="left:20px;top:805px;width:232px;background:#80ffff"></div>
<div class="gl" style="left:251px;top:805px"></div>
<svg class="a" style="left:23px;top:806px" width="16" height="13"><use href="#i-app"/></svg>
<div class="t" style="left:45px;top:805px">svchost.exe (netsetupsvc)</div>
<div class="a" style="left:11px;top:830px;width:9px;height:1px;background:repeating-linear-gradient(90deg,#808080 0 1px,transparent 1px 2px)"></div>
<div class="row" style="left:20px;top:822px;width:232px;background:#80ffff"></div>
<div class="gl" style="left:251px;top:822px"></div>
<svg class="a" style="left:23px;top:822px" width="16" height="16"><use href="#i-wmi"/></svg>
<div class="t" style="left:45px;top:822px">WmiPrvSE.exe (WMI Provider Host)</div>
<div class="a" style="left:11px;top:847px;width:9px;height:1px;background:repeating-linear-gradient(90deg,#808080 0 1px,transparent 1px 2px)"></div>
<div class="row" style="left:20px;top:839px;width:232px;background:#d49c5c"></div>
<div class="gl" style="left:251px;top:839px"></div>
<svg class="a" style="left:23px;top:839px" width="16" height="16"><use href="#i-bc"/></svg>
<div class="t" style="left:45px;top:839px">BCompare.exe (Beyond Compare)</div>
<div class="a" style="left:11px;top:864px;width:9px;height:1px;background:repeating-linear-gradient(90deg,#808080 0 1px,transparent 1px 2px)"></div>
<div class="row" style="left:20px;top:856px;width:232px;background:#80ffff"></div>
<div class="gl" style="left:251px;top:856px"></div>
<svg class="a" style="left:23px;top:857px" width="16" height="13"><use href="#i-app"/></svg>
<div class="t" style="left:45px;top:856px">svchost.exe (deviceassociationservice)</div>
<div class="a" style="left:11px;top:881px;width:9px;height:1px;background:repeating-linear-gradient(90deg,#808080 0 1px,transparent 1px 2px)"></div>
<div class="row" style="left:20px;top:873px;width:232px;background:#80ffff"></div>
<div class="gl" style="left:251px;top:873px"></div>
<svg class="a" style="left:23px;top:874px" width="16" height="13"><use href="#i-app"/></svg>
<div class="t" style="left:45px;top:873px">svchost.exe (w32time)</div>
<div class="a" style="left:11px;top:898px;width:9px;height:1px;background:repeating-linear-gradient(90deg,#808080 0 1px,transparent 1px 2px)"></div>
<div class="row" style="left:20px;top:890px;width:232px;background:#ffe8f8"></div>
<div class="gl" style="left:251px;top:890px"></div>
<svg class="a" style="left:23px;top:891px" width="16" height="13"><use href="#i-app"/></svg>
<div class="t gray" style="left:45px;top:890px">backgroundTaskHost.exe (Backgrou...</div>
<div class="a" style="left:11px;top:915px;width:9px;height:1px;background:repeating-linear-gradient(90deg,#808080 0 1px,transparent 1px 2px)"></div>
<div class="row" style="left:20px;top:907px;width:232px;background:#aaccff"></div>
<div class="gl" style="left:251px;top:907px"></div>
<svg class="a" style="left:23px;top:908px" width="16" height="13"><use href="#i-app"/></svg>
<div class="t" style="left:45px;top:907px">SbieSvc.exe (Sandboxie Service)</div>
<div class="a" style="left:11px;top:932px;width:9px;height:1px;background:repeating-linear-gradient(90deg,#808080 0 1px,transparent 1px 2px)"></div>
<div class="row" style="left:20px;top:924px;width:232px;background:#80ffff"></div>
<div class="gl" style="left:251px;top:924px"></div>
<svg class="a" style="left:23px;top:925px" width="16" height="13"><use href="#i-app"/></svg>
<div class="t" style="left:45px;top:924px">SbieSvc.exe (Sandboxie Service)</div>
<div class="a" style="left:11px;top:949px;width:9px;height:1px;background:repeating-linear-gradient(90deg,#808080 0 1px,transparent 1px 2px)"></div>
<div class="row" style="left:20px;top:941px;width:232px;background:#80ffff"></div>
<div class="gl" style="left:251px;top:941px"></div>
<svg class="a" style="left:23px;top:942px" width="16" height="13"><use href="#i-app"/></svg>
<div class="t" style="left:45px;top:941px">svchost.exe (displayenhancementser...</div>
<div class="a" style="left:11px;top:966px;width:9px;height:1px;background:repeating-linear-gradient(90deg,#808080 0 1px,transparent 1px 2px)"></div>
<div class="row" style="left:20px;top:958px;width:232px;background:#80ffff"></div>
<div class="gl" style="left:251px;top:958px"></div>
<svg class="a" style="left:23px;top:959px" width="16" height="13"><use href="#i-app"/></svg>
<div class="t" style="left:45px;top:958px">svchost.exe (sensorservice)</div>
<div class="a" style="left:11px;top:983px;width:9px;height:1px;background:repeating-linear-gradient(90deg,#808080 0 1px,transparent 1px 2px)"></div>
<div class="row" style="left:20px;top:975px;width:232px;background:#ffe8f8"></div>
<div class="gl" style="left:251px;top:975px"></div>
<svg class="a" style="left:23px;top:976px" width="16" height="13"><use href="#i-app"/></svg>
<div class="t" style="left:45px;top:975px">RuntimeBroker.exe (Runtime Broker)</div>
<div class="a" style="left:11px;top:1000px;width:9px;height:1px;background:repeating-linear-gradient(90deg,#808080 0 1px,transparent 1px 2px)"></div>
<div class="row" style="left:20px;top:992px;width:232px;background:#80ffff"></div>
<div class="gl" style="left:251px;top:992px"></div>
<svg class="a" style="left:23px;top:993px" width="16" height="13"><use href="#i-app"/></svg>
<div class="t" style="left:45px;top:992px">svchost.exe (fdphost)</div>
<div class="a" style="left:11px;top:1017px;width:9px;height:1px;background:repeating-linear-gradient(90deg,#808080 0 1px,transparent 1px 2px)"></div>
<div class="row" style="left:20px;top:1009px;width:232px;background:#d49c5c"></div>
<div class="gl" style="left:251px;top:1009px"></div>
<svg class="a" style="left:23px;top:1009px" width="16" height="16"><use href="#i-gh"/></svg>
<div class="t" style="left:45px;top:1009px">GitHubDesktop.exe</div>
<div class="sb" style="left:0px;top:1020px;width:252px;height:17px"></div>
<svg class="a" style="left:5px;top:1024px" width="7" height="9"><path d="M6 0 L6 9 L0.5 4.5 Z" fill="#a0a0a0"/></svg>
<svg class="a" style="left:241px;top:1024px" width="7" height="9"><path d="M0 0 L0 9 L5.5 4.5 Z" fill="#a0a0a0"/></svg>
</div>
<div class="a" style="left:262px;top:228px;width:249px;height:1041px;border-top:2px solid #808080;border-left:1px solid #696969;border-right:1px solid #fff;border-bottom:1px solid #fff;background:#fff;overflow:hidden">
<div class="hdr" style="left:5px;top:4px">PID</div>
<div class="hdr" style="left:105px;top:4px">Status</div>
<div class="hdr" style="left:205px;top:4px">Service</div>
<div class="a" style="left:100px;top:0px;width:1px;height:23px;background:#e5e5e5"></div>
<div class="a" style="left:200px;top:0px;width:1px;height:23px;background:#e5e5e5"></div>
<div class="row" style="left:0;top:23px;width:229px;background:#80ffff"></div>
<div class="gl" style="left:100px;top:23px"></div><div class="gl" style="left:200px;top:23px"></div>
<div class="t sx" style="left:4px;top:23px">14256 [0x37b0]</div>
<div class="t sx" style="left:104px;top:23px">Service, System</div>
<div class="t" style="left:204px;top:23px">gpsvc</div>
<div class="row" style="left:0;top:40px;width:229px;background:#80ffff"></div>
<div class="gl" style="left:100px;top:40px"></div><div class="gl" style="left:200px;top:40px"></div>
<div class="t sx" style="left:4px;top:40px">16788 [0x4194]</div>
<div class="t sx" style="left:104px;top:40px">Service</div>
<div class="t" style="left:204px;top:40px">stisvc</div>
<div class="row" style="left:0;top:57px;width:229px;background:#f0f0f0"></div>
<div class="gl" style="left:100px;top:57px"></div><div class="gl" style="left:200px;top:57px"></div>
<div class="t sx" style="left:4px;top:57px">13664 [0x3560]</div>
<div class="t sx" style="left:104px;top:57px">Wow64, InSigni...</div>
<div class="row" style="left:0;top:74px;width:229px;background:#ffff80"></div>
<div class="gl" style="left:100px;top:74px"></div><div class="gl" style="left:200px;top:74px"></div>
<div class="t sx" style="left:4px;top:74px">10084 [0x2764]</div>
<div class="t sx" style="left:104px;top:74px">Cross Session, ...</div>
<div class="row" style="left:0;top:91px;width:229px;background:#80ffff"></div>
<div class="gl" style="left:100px;top:91px"></div><div class="gl" style="left:200px;top:91px"></div>
<div class="t sx" style="left:4px;top:91px">9996 [0x270c]</div>
<div class="t sx" style="left:104px;top:91px">Service</div>
<div class="t" style="left:204px;top:91px">wdiservicehost</div>
<div class="row" style="left:0;top:108px;width:229px;background:#ffb833"></div>
<div class="gl" style="left:100px;top:108px"></div><div class="gl" style="left:200px;top:108px"></div>
<div class="t sx" style="left:4px;top:108px">41560 [0xa258]</div>
<div class="t sx" style="left:104px;top:108px">Elevated, Cross ...</div>
<div class="row" style="left:0;top:125px;width:229px;background:#ffb833"></div>
<div class="gl" style="left:100px;top:125px"></div><div class="gl" style="left:200px;top:125px"></div>
<div class="t sx" style="left:4px;top:125px">43164 [0xa89c]</div>
<div class="t sx" style="left:104px;top:125px">Elevated, Cross ...</div>
<div class="row" style="left:0;top:142px;width:229px;background:#ffb833"></div>
<div class="gl" style="left:100px;top:142px"></div><div class="gl" style="left:200px;top:142px"></div>
<div class="t sx" style="left:4px;top:142px">39372 [0x99cc]</div>
<div class="t sx" style="left:104px;top:142px">Elevated, Cross ...</div>
<div class="row" style="left:0;top:159px;width:229px;background:#d49c5c"></div>
<div class="gl" style="left:100px;top:159px"></div><div class="gl" style="left:200px;top:159px"></div>
<div class="t sx" style="left:4px;top:159px">22864 [0x5950]</div>
<div class="t sx" style="left:104px;top:159px">Wow64, InSigni...</div>
<div class="row" style="left:0;top:176px;width:229px;background:#dcff00"></div>
<div class="gl" style="left:100px;top:176px"></div><div class="gl" style="left:200px;top:176px"></div>
<div class="t sx" style="left:4px;top:176px">2408 [0x968]</div>
<div class="t sx" style="left:104px;top:176px">DotNet, InSignif...</div>
<div class="row" style="left:0;top:193px;width:229px;background:#dcff00"></div>
<div class="gl" style="left:100px;top:193px"></div><div class="gl" style="left:200px;top:193px"></div>
<div class="t sx" style="left:4px;top:193px">27068 [0x69bc]</div>
<div class="t sx" style="left:104px;top:193px">DotNet, InSignif...</div>
<div class="row" style="left:0;top:210px;width:229px;background:#80ffff"></div>
<div class="gl" style="left:100px;top:210px"></div><div class="gl" style="left:200px;top:210px"></div>
<div class="t sx" style="left:4px;top:210px">31668 [0x7bb4]</div>
<div class="t sx" style="left:104px;top:210px">Service, System</div>
<div class="t" style="left:204px;top:210px">wdisystemhost</div>
<div class="row" style="left:0;top:227px;width:229px;background:#d49c5c"></div>
<div class="gl" style="left:100px;top:227px"></div><div class="gl" style="left:200px;top:227px"></div>
<div class="t sx" style="left:4px;top:227px">27400 [0x6b08]</div>
<div class="t sx" style="left:104px;top:227px">InSignificantJob...</div>
<div class="row" style="left:0;top:244px;width:229px;background:#d49c5c"></div>
<div class="gl" style="left:100px;top:244px"></div><div class="gl" style="left:200px;top:244px"></div>
<div class="t sx" style="left:4px;top:244px">34284 [0x85ec]</div>
<div class="t sx" style="left:104px;top:244px">InSignificantJob...</div>
<div class="row" style="left:0;top:261px;width:229px;background:#d49c5c"></div>
<div class="gl" style="left:100px;top:261px"></div><div class="gl" style="left:200px;top:261px"></div>
<div class="t sx" style="left:4px;top:261px">20464 [0x4ff0]</div>
<div class="t sx" style="left:104px;top:261px">InSignificantJob...</div>
<div class="row" style="left:0;top:278px;width:229px;background:#d49c5c"></div>
<div class="gl" style="left:100px;top:278px"></div><div class="gl" style="left:200px;top:278px"></div>
<div class="t sx" style="left:4px;top:278px">13300 [0x33f4]</div>
<div class="t sx" style="left:104px;top:278px">InSignificantJob...</div>
<div class="row" style="left:0;top:295px;width:229px;background:#d49c5c"></div>
<div class="gl" style="left:100px;top:295px"></div><div class="gl" style="left:200px;top:295px"></div>
<div class="t sx" style="left:4px;top:295px">4804 [0x12c4]</div>
<div class="t sx" style="left:104px;top:295px">InSignificantJob...</div>
<div class="row" style="left:0;top:312px;width:229px;background:#ffff80"></div>
<div class="gl" style="left:100px;top:312px"></div><div class="gl" style="left:200px;top:312px"></div>
<div class="t sx" style="left:4px;top:312px">41960 [0xa3e8]</div>
<div class="t sx" style="left:104px;top:312px">Owned</div>
<div class="row" style="left:0;top:329px;width:229px;background:#ffff80"></div>
<div class="gl" style="left:100px;top:329px"></div><div class="gl" style="left:200px;top:329px"></div>
<div class="t sx" style="left:4px;top:329px">39476 [0x9a34]</div>
<div class="t sx" style="left:104px;top:329px">Owned</div>
<div class="row" style="left:0;top:346px;width:229px;background:#ffff80"></div>
<div class="gl" style="left:100px;top:346px"></div><div class="gl" style="left:200px;top:346px"></div>
<div class="t sx" style="left:4px;top:346px">18004 [0x4654]</div>
<div class="t sx" style="left:104px;top:346px">Owned</div>
<div class="row" style="left:0;top:363px;width:229px;background:#ffff80"></div>
<div class="gl" style="left:100px;top:363px"></div><div class="gl" style="left:200px;top:363px"></div>
<div class="t sx" style="left:4px;top:363px">13760 [0x35c0]</div>
<div class="t sx" style="left:104px;top:363px">Debugged, Ow...</div>
<div class="row" style="left:0;top:380px;width:229px;background:#80ffff"></div>
<div class="gl" style="left:100px;top:380px"></div><div class="gl" style="left:200px;top:380px"></div>
<div class="t sx" style="left:4px;top:380px">32144 [0x7d90]</div>
<div class="t sx" style="left:104px;top:380px">Service, System</div>
<div class="t" style="left:204px;top:380px">vsstandardcollector</div>
<div class="row" style="left:0;top:397px;width:229px;background:#dcff00"></div>
<div class="gl" style="left:100px;top:397px"></div><div class="gl" style="left:200px;top:397px"></div>
<div class="t sx" style="left:4px;top:397px">13232 [0x33b0]</div>
<div class="t sx" style="left:104px;top:397px">DotNet, InSignif...</div>
<div class="row" style="left:0;top:414px;width:229px;background:#d49c5c"></div>
<div class="gl" style="left:100px;top:414px"></div><div class="gl" style="left:200px;top:414px"></div>
<div class="t sx gray" style="left:4px;top:414px">15568 [0x3cd0]</div>
<div class="t sx gray" style="left:104px;top:414px">Suspended, InSi...</div>
<div class="row" style="left:0;top:431px;width:229px;background:#dcff00"></div>
<div class="gl" style="left:100px;top:431px"></div><div class="gl" style="left:200px;top:431px"></div>
<div class="t sx" style="left:4px;top:431px">26732 [0x686c]</div>
<div class="t sx" style="left:104px;top:431px">DotNet, InSignif...</div>
<div class="row" style="left:0;top:448px;width:229px;background:#dcff00"></div>
<div class="gl" style="left:100px;top:448px"></div><div class="gl" style="left:200px;top:448px"></div>
<div class="t sx" style="left:4px;top:448px">12468 [0x30b4]</div>
<div class="t sx" style="left:104px;top:448px">DotNet, InSignif...</div>
<div class="row" style="left:0;top:465px;width:229px;background:#ffff80"></div>
<div class="gl" style="left:100px;top:465px"></div><div class="gl" style="left:200px;top:465px"></div>
<div class="t sx" style="left:4px;top:465px">29408 [0x72e0]</div>
<div class="t sx" style="left:104px;top:465px">Owned</div>
<div class="row" style="left:0;top:482px;width:229px;background:#ffff80"></div>
<div class="gl" style="left:100px;top:482px"></div><div class="gl" style="left:200px;top:482px"></div>
<div class="t sx" style="left:4px;top:482px">3192 [0xc78]</div>
<div class="t sx" style="left:104px;top:482px">Owned</div>
<div class="row" style="left:0;top:499px;width:229px;background:#dcff00"></div>
<div class="gl" style="left:100px;top:499px"></div><div class="gl" style="left:200px;top:499px"></div>
<div class="t sx" style="left:4px;top:499px">25576 [0x63e8]</div>
<div class="t sx" style="left:104px;top:499px">DotNet, InSignif...</div>
<div class="row" style="left:0;top:516px;width:229px;background:#dcff00"></div>
<div class="gl" style="left:100px;top:516px"></div><div class="gl" style="left:200px;top:516px"></div>
<div class="t sx" style="left:4px;top:516px">35876 [0x8c24]</div>
<div class="t sx" style="left:104px;top:516px">DotNet, InSignif...</div>
<div class="row" style="left:0;top:533px;width:229px;background:#dcff00"></div>
<div class="gl" style="left:100px;top:533px"></div><div class="gl" style="left:200px;top:533px"></div>
<div class="t sx" style="left:4px;top:533px">16256 [0x3f80]</div>
<div class="t sx" style="left:104px;top:533px">DotNet, InSignif...</div>
<div class="row" style="left:0;top:550px;width:229px;background:#dcff00"></div>
<div class="gl" style="left:100px;top:550px"></div><div class="gl" style="left:200px;top:550px"></div>
<div class="t sx" style="left:4px;top:550px">27304 [0x6aa8]</div>
<div class="t sx" style="left:104px;top:550px">DotNet, InSignif...</div>
<div class="row" style="left:0;top:567px;width:229px;background:#dcff00"></div>
<div class="gl" style="left:100px;top:567px"></div><div class="gl" style="left:200px;top:567px"></div>
<div class="t sx" style="left:4px;top:567px">40588 [0x9e8c]</div>
<div class="t sx" style="left:104px;top:567px">DotNet, Owned</div>
<div class="row" style="left:0;top:584px;width:229px;background:#dcff00"></div>
<div class="gl" style="left:100px;top:584px"></div><div class="gl" style="left:200px;top:584px"></div>
<div class="t sx" style="left:4px;top:584px">36004 [0x8ca4]</div>
<div class="t sx" style="left:104px;top:584px">DotNet, Owned</div>
<div class="row" style="left:0;top:601px;width:229px;background:#ffb833"></div>
<div class="gl" style="left:100px;top:601px"></div><div class="gl" style="left:200px;top:601px"></div>
<div class="t sx" style="left:4px;top:601px">35328 [0x8a00]</div>
<div class="t sx" style="left:104px;top:601px">Elevated, Owned</div>
<div class="row" style="left:0;top:618px;width:229px;background:#ffb833"></div>
<div class="gl" style="left:100px;top:618px"></div><div class="gl" style="left:200px;top:618px"></div>
<div class="t sx" style="left:4px;top:618px">36052 [0x8cd4]</div>
<div class="t sx" style="left:104px;top:618px">Elevated, Owned</div>
<div class="row" style="left:0;top:635px;width:229px;background:#ffb833"></div>
<div class="gl" style="left:100px;top:635px"></div><div class="gl" style="left:200px;top:635px"></div>
<div class="t sx" style="left:4px;top:635px">42864 [0xa770]</div>
<div class="t sx" style="left:104px;top:635px">Elevated, DotNe...</div>
<div class="row" style="left:0;top:652px;width:229px;background:#ffb833"></div>
<div class="gl" style="left:100px;top:652px"></div><div class="gl" style="left:200px;top:652px"></div>
<div class="t sx" style="left:4px;top:652px">36956 [0x905c]</div>
<div class="t sx" style="left:104px;top:652px">Elevated, DotNe...</div>
<div class="row" style="left:0;top:669px;width:229px;background:#ffb833"></div>
<div class="gl" style="left:100px;top:669px"></div><div class="gl" style="left:200px;top:669px"></div>
<div class="t sx gray" style="left:4px;top:669px">31460 [0x7ae4]</div>
<div class="t sx gray" style="left:104px;top:669px">Suspended, Ele...</div>
<div class="row" style="left:0;top:686px;width:229px;background:#ffb833"></div>
<div class="gl" style="left:100px;top:686px"></div><div class="gl" style="left:200px;top:686px"></div>
<div class="t sx" style="left:4px;top:686px">18460 [0x481c]</div>
<div class="t sx" style="left:104px;top:686px">Elevated, DotNe...</div>
<div class="row" style="left:0;top:703px;width:229px;background:#ffb833"></div>
<div class="gl" style="left:100px;top:703px"></div><div class="gl" style="left:200px;top:703px"></div>
<div class="t sx" style="left:4px;top:703px">27788 [0x6c8c]</div>
<div class="t sx" style="left:104px;top:703px">Elevated, DotNe...</div>
<div class="row" style="left:0;top:720px;width:229px;background:#ffb833"></div>
<div class="gl" style="left:100px;top:720px"></div><div class="gl" style="left:200px;top:720px"></div>
<div class="t sx" style="left:4px;top:720px">14572 [0x38ec]</div>
<div class="t sx" style="left:104px;top:720px">Elevated, DotNe...</div>
<div class="row" style="left:0;top:737px;width:229px;background:#ffb833"></div>
<div class="gl" style="left:100px;top:737px"></div><div class="gl" style="left:200px;top:737px"></div>
<div class="t sx" style="left:4px;top:737px">26848 [0x68e0]</div>
<div class="t sx" style="left:104px;top:737px">Elevated, DotNe...</div>
<div class="row" style="left:0;top:754px;width:229px;background:#ffb833"></div>
<div class="gl" style="left:100px;top:754px"></div><div class="gl" style="left:200px;top:754px"></div>
<div class="t sx" style="left:4px;top:754px">31532 [0x7b2c]</div>
<div class="t sx" style="left:104px;top:754px">Elevated, DotNe...</div>
<div class="row" style="left:0;top:771px;width:229px;background:#ffb833"></div>
<div class="gl" style="left:100px;top:771px"></div><div class="gl" style="left:200px;top:771px"></div>
<div class="t sx" style="left:4px;top:771px">33072 [0x8130]</div>
<div class="t sx" style="left:104px;top:771px">Elevated, Cross ...</div>
<div class="row" style="left:0;top:788px;width:229px;background:#ffb833"></div>
<div class="gl" style="left:100px;top:788px"></div><div class="gl" style="left:200px;top:788px"></div>
<div class="t sx" style="left:4px;top:788px">31160 [0x79b8]</div>
<div class="t sx" style="left:104px;top:788px">Elevated, Cross ...</div>
<div class="row" style="left:0;top:805px;width:229px;background:#80ffff"></div>
<div class="gl" style="left:100px;top:805px"></div><div class="gl" style="left:200px;top:805px"></div>
<div class="t sx" style="left:4px;top:805px">13244 [0x33bc]</div>
<div class="t sx" style="left:104px;top:805px">Service, System</div>
<div class="t" style="left:204px;top:805px">netsetupsvc</div>
<div class="row" style="left:0;top:822px;width:229px;background:#80ffff"></div>
<div class="gl" style="left:100px;top:822px"></div><div class="gl" style="left:200px;top:822px"></div>
<div class="t sx" style="left:4px;top:822px">3668 [0xe54]</div>
<div class="t sx" style="left:104px;top:822px">InSignificantJob...</div>
<div class="row" style="left:0;top:839px;width:229px;background:#d49c5c"></div>
<div class="gl" style="left:100px;top:839px"></div><div class="gl" style="left:200px;top:839px"></div>
<div class="t sx" style="left:4px;top:839px">14432 [0x3860]</div>
<div class="t sx" style="left:104px;top:839px">InSignificantJob...</div>
<div class="row" style="left:0;top:856px;width:229px;background:#80ffff"></div>
<div class="gl" style="left:100px;top:856px"></div><div class="gl" style="left:200px;top:856px"></div>
<div class="t sx" style="left:4px;top:856px">42496 [0xa600]</div>
<div class="t sx" style="left:104px;top:856px">Service, System</div>
<div class="t" style="left:204px;top:856px">deviceassociationservice</div>
<div class="row" style="left:0;top:873px;width:229px;background:#80ffff"></div>
<div class="gl" style="left:100px;top:873px"></div><div class="gl" style="left:200px;top:873px"></div>
<div class="t sx" style="left:4px;top:873px">39568 [0x9a90]</div>
<div class="t sx" style="left:104px;top:873px">Service</div>
<div class="t" style="left:204px;top:873px">w32time</div>
<div class="row" style="left:0;top:890px;width:229px;background:#ffe8f8"></div>
<div class="gl" style="left:100px;top:890px"></div><div class="gl" style="left:200px;top:890px"></div>
<div class="t sx gray" style="left:4px;top:890px">5568 [0x15c0]</div>
<div class="t sx gray" style="left:104px;top:890px">Suspended, Cro...</div>
<div class="row" style="left:0;top:907px;width:229px;background:#aaccff"></div>
<div class="gl" style="left:100px;top:907px"></div><div class="gl" style="left:200px;top:907px"></div>
<div class="t sx" style="left:4px;top:907px">18804 [0x4974]</div>
<div class="t sx" style="left:104px;top:907px">Cross Session, S...</div>
<div class="row" style="left:0;top:924px;width:229px;background:#80ffff"></div>
<div class="gl" style="left:100px;top:924px"></div><div class="gl" style="left:200px;top:924px"></div>
<div class="t sx" style="left:4px;top:924px">33024 [0x8100]</div>
<div class="t sx" style="left:104px;top:924px">Service, System</div>
<div class="t" style="left:204px;top:924px">sbiesvc</div>
<div class="row" style="left:0;top:941px;width:229px;background:#80ffff"></div>
<div class="gl" style="left:100px;top:941px"></div><div class="gl" style="left:200px;top:941px"></div>
<div class="t sx" style="left:4px;top:941px">13912 [0x3658]</div>
<div class="t sx" style="left:104px;top:941px">Service, System</div>
<div class="t" style="left:204px;top:941px">displayenhancementservice</div>
<div class="row" style="left:0;top:958px;width:229px;background:#80ffff"></div>
<div class="gl" style="left:100px;top:958px"></div><div class="gl" style="left:200px;top:958px"></div>
<div class="t sx" style="left:4px;top:958px">29844 [0x7494]</div>
<div class="t sx" style="left:104px;top:958px">Service, System</div>
<div class="t" style="left:204px;top:958px">sensorservice</div>
<div class="row" style="left:0;top:975px;width:229px;background:#ffe8f8"></div>
<div class="gl" style="left:100px;top:975px"></div><div class="gl" style="left:200px;top:975px"></div>
<div class="t sx" style="left:4px;top:975px">34300 [0x85fc]</div>
<div class="t sx" style="left:104px;top:975px">Cross Session, I...</div>
<div class="row" style="left:0;top:992px;width:229px;background:#80ffff"></div>
<div class="gl" style="left:100px;top:992px"></div><div class="gl" style="left:200px;top:992px"></div>
<div class="t sx" style="left:4px;top:992px">22832 [0x5930]</div>
<div class="t sx" style="left:104px;top:992px">Service</div>
<div class="t" style="left:204px;top:992px">fdphost</div>
<div class="row" style="left:0;top:1009px;width:229px;background:#d49c5c"></div>
<div class="gl" style="left:100px;top:1009px"></div><div class="gl" style="left:200px;top:1009px"></div>
<div class="t sx" style="left:4px;top:1009px">17084 [0x42bc]</div>
<div class="t sx" style="left:104px;top:1009px">InSignificantJob</div>
<div class="sb" style="left:230px;top:0;width:17px;height:1020px"></div>
<div class="thumb" style="left:237px;top:17px;width:2px;height:273px"></div>
<div class="sb" style="left:0;top:1020px;width:248px;height:17px"></div>
<div class="thumb" style="left:18px;top:1028px;width:26px;height:2px"></div>
</div>
<div class="tab" style="left:518px;top:230px;width:561px;height:22px;line-height:21px">RPC Endpoints</div>
<div class="tab" style="left:518px;top:252px;width:58px;height:19px;line-height:15px">System</div>
<div class="tab" style="left:575px;top:252px;width:45px;height:19px;line-height:15px">CPU</div>
<div class="tab" style="left:619px;top:252px;width:63px;height:19px;line-height:15px">Memory</div>
<div class="tab" style="left:681px;top:252px;width:44px;height:19px;line-height:15px">GPU</div>
<div class="tab" style="left:724px;top:252px;width:44px;height:19px;line-height:15px">Disk</div>
<div class="tab" style="left:767px;top:252px;width:46px;height:19px;line-height:15px">Files</div>
<div class="tab" style="left:812px;top:252px;width:64px;height:19px;line-height:15px">Network</div>
<div class="tab sel" style="left:875px;top:250px;width:65px;height:21px;line-height:17px">Sockets</div>
<div class="tab" style="left:939px;top:252px;width:74px;height:19px;line-height:15px">Dns Cache</div>
<div class="tab" style="left:1012px;top:252px;width:67px;height:19px;line-height:15px">Services</div>
<div class="frame" style="left:518px;top:271px;width:589px;height:223px">
<div class="hdr" style="left:4px;top:4px">Process</div>
<div class="hdr" style="left:104px;top:4px">Protocol</div>
<div class="hdr" style="left:204px;top:4px">State</div>
<div class="hdr" style="left:304px;top:4px">Local address</div>
<div class="hdr" style="left:404px;top:4px">Local port</div>
<div class="hdr" style="left:504px;top:4px">Remote address</div>
<div class="a" style="left:99px;top:0;width:1px;height:23px;background:#e5e5e5"></div>
<div class="a" style="left:199px;top:0;width:1px;height:23px;background:#e5e5e5"></div>
<div class="a" style="left:299px;top:0;width:1px;height:23px;background:#e5e5e5"></div>
<div class="a" style="left:399px;top:0;width:1px;height:23px;background:#e5e5e5"></div>
<div class="a" style="left:499px;top:0;width:1px;height:23px;background:#e5e5e5"></div>
<svg class="a" style="left:45px;top:0px" width="10" height="6"><path d="M0.5 0.5 L5 5 L9.5 0.5" fill="none" stroke="#a0a0a0"/></svg>
<div class="row" style="left:20px;top:23px;width:550px;background:#fff"></div>
<div class="gl" style="left:99px;top:23px"></div>
<div class="gl" style="left:199px;top:23px"></div>
<div class="gl" style="left:299px;top:23px"></div>
<div class="gl" style="left:399px;top:23px"></div>
<div class="gl" style="left:499px;top:23px"></div>
<svg class="a" style="left:23px;top:24px" width="16" height="13"><use href="#i-app"/></svg>
<div class="t" style="left:45px;top:23px">wininit....</div>
<div class="t" style="left:103px;top:23px">TCP6</div>
<div class="t" style="left:203px;top:23px">Listen</div>
<div class="t" style="left:303px;top:23px">::</div>
<div class="t" style="left:403px;top:23px">49665</div>
<div class="t" style="left:503px;top:23px">::</div>
<div class="row" style="left:20px;top:40px;width:550px;background:#fff"></div>
<div class="gl" style="left:99px;top:40px"></div>
<div class="gl" style="left:199px;top:40px"></div>
<div class="gl" style="left:299px;top:40px"></div>
<div class="gl" style="left:399px;top:40px"></div>
<div class="gl" style="left:499px;top:40px"></div>
<svg class="a" style="left:23px;top:41px" width="16" height="13"><use href="#i-app"/></svg>
<div class="t" style="left:45px;top:40px">wininit....</div>
<div class="t" style="left:103px;top:40px">TCP</div>
<div class="t" style="left:203px;top:40px">Listen</div>
<div class="t" style="left:303px;top:40px">0.0.0.0</div>
<div class="t" style="left:403px;top:40px">49665</div>
<div class="t" style="left:503px;top:40px">0.0.0.0</div>
<div class="row" style="left:20px;top:57px;width:550px;background:#fff"></div>
<div class="gl" style="left:99px;top:57px"></div>
<div class="gl" style="left:199px;top:57px"></div>
<div class="gl" style="left:299px;top:57px"></div>
<div class="gl" style="left:399px;top:57px"></div>
<div class="gl" style="left:499px;top:57px"></div>
<svg class="a" style="left:23px;top:58px" width="16" height="13"><use href="#i-app"/></svg>
<div class="t" style="left:45px;top:57px">Waiting...</div>
<div class="t" style="left:103px;top:57px">TCP</div>
<div class="t" style="left:203px;top:57px">Time wait</div>
<div class="t" style="left:303px;top:57px">10.70.10.22</div>
<div class="t" style="left:403px;top:57px">7680</div>
<div class="t" style="left:503px;top:57px">10.70.10.19</div>
<div class="row" style="left:20px;top:74px;width:550px;background:#fff"></div>
<div class="gl" style="left:99px;top:74px"></div>
<div class="gl" style="left:199px;top:74px"></div>
<div class="gl" style="left:299px;top:74px"></div>
<div class="gl" style="left:399px;top:74px"></div>
<div class="gl" style="left:499px;top:74px"></div>
<svg class="a" style="left:23px;top:75px" width="16" height="13"><use href="#i-app"/></svg>
<div class="t" style="left:45px;top:74px">Waiting...</div>
<div class="t" style="left:103px;top:74px">TCP</div>
<div class="t" style="left:203px;top:74px">Time wait</div>
<div class="t" style="left:303px;top:74px">10.70.10.22</div>
<div class="t" style="left:403px;top:74px">7680</div>
<div class="t" style="left:503px;top:74px">10.70.10.10</div>
<div class="row" style="left:20px;top:91px;width:550px;background:#fff"></div>
<div class="gl" style="left:99px;top:91px"></div>
<div class="gl" style="left:199px;top:91px"></div>
<div class="gl" style="left:299px;top:91px"></div>
<div class="gl" style="left:399px;top:91px"></div>
<div class="gl" style="left:499px;top:91px"></div>
<svg class="a" style="left:23px;top:92px" width="16" height="13"><use href="#i-app"/></svg>
<div class="t" style="left:45px;top:91px">Waiting...</div>
<div class="t" style="left:103px;top:91px">TCP</div>
<div class="t" style="left:203px;top:91px">Time wait</div>
<div class="t" style="left:303px;top:91px">10.70.10.22</div>
<div class="t" style="left:403px;top:91px">7680</div>
<div class="t" style="left:503px;top:91px">10.70.10.10</div>
<div class="row" style="left:20px;top:108px;width:550px;background:#fff"></div>
<div class="gl" style="left:99px;top:108px"></div>
<div class="gl" style="left:199px;top:108px"></div>
<div class="gl" style="left:299px;top:108px"></div>
<div class="gl" style="left:399px;top:108px"></div>
<div class="gl" style="left:499px;top:108px"></div>
<svg class="a" style="left:23px;top:109px" width="16" height="13"><use href="#i-app"/></svg>
<div class="t" style="left:45px;top:108px">Waiting...</div>
<div class="t" style="left:103px;top:108px">TCP</div>
<div class="t" style="left:203px;top:108px">Time wait</div>
<div class="t" style="left:303px;top:108px">10.70.10.22</div>
<div class="t" style="left:403px;top:108px">7680</div>
<div class="t" style="left:503px;top:108px">10.70.10.10</div>
<div class="row" style="left:20px;top:125px;width:550px;background:#fff"></div>
<div class="gl" style="left:99px;top:125px"></div>
<div class="gl" style="left:199px;top:125px"></div>
<div class="gl" style="left:299px;top:125px"></div>
<div class="gl" style="left:399px;top:125px"></div>
<div class="gl" style="left:499px;top:125px"></div>
<svg class="a" style="left:23px;top:125px" width="16" height="16"><use href="#i-vnc"/></svg>
<div class="t" style="left:45px;top:125px">vncserv...</div>
<div class="t" style="left:103px;top:125px">UDP6</div>
<div class="t" style="left:203px;top:125px">Open</div>
<div class="t" style="left:303px;top:125px">::</div>
<div class="t" style="left:403px;top:125px">5900</div>
<div class="t" style="left:503px;top:125px"></div>
<div class="row" style="left:20px;top:142px;width:550px;background:#fff"></div>
<div class="gl" style="left:99px;top:142px"></div>
<div class="gl" style="left:199px;top:142px"></div>
<div class="gl" style="left:299px;top:142px"></div>
<div class="gl" style="left:399px;top:142px"></div>
<div class="gl" style="left:499px;top:142px"></div>
<svg class="a" style="left:23px;top:142px" width="16" height="16"><use href="#i-vnc"/></svg>
<div class="t" style="left:45px;top:142px">vncserv...</div>
<div class="t" style="left:103px;top:142px">UDP</div>
<div class="t" style="left:203px;top:142px">Open</div>
<div class="t" style="left:303px;top:142px">0.0.0.0</div>
<div class="t" style="left:403px;top:142px">5900</div>
<div class="t" style="left:503px;top:142px"></div>
<div class="row" style="left:20px;top:159px;width:550px;background:#fff"></div>
<div class="gl" style="left:99px;top:159px"></div>
<div class="gl" style="left:199px;top:159px"></div>
<div class="gl" style="left:299px;top:159px"></div>
<div class="gl" style="left:399px;top:159px"></div>
<div class="gl" style="left:499px;top:159px"></div>
<svg class="a" style="left:23px;top:159px" width="16" height="16"><use href="#i-vnc"/></svg>
<div class="t" style="left:45px;top:159px">vncserv...</div>
<div class="t" style="left:103px;top:159px">TCP6</div>
<div class="t" style="left:203px;top:159px">Listen</div>
<div class="t" style="left:303px;top:159px">::</div>
<div class="t" style="left:403px;top:159px">5900</div>
<div class="t" style="left:503px;top:159px">::</div>
<div class="row" style="left:20px;top:176px;width:550px;background:#fff"></div>
<div class="gl" style="left:99px;top:176px"></div>
<div class="gl" style="left:199px;top:176px"></div>
<div class="gl" style="left:299px;top:176px"></div>
<div class="gl" style="left:399px;top:176px"></div>
<div class="gl" style="left:499px;top:176px"></div>
<svg class="a" style="left:23px;top:176px" width="16" height="16"><use href="#i-vnc"/></svg>
<div class="t" style="left:45px;top:176px">vncserv...</div>
<div class="t" style="left:103px;top:176px">TCP</div>
<div class="t" style="left:203px;top:176px">Listen</div>
<div class="t" style="left:303px;top:176px">0.0.0.0</div>
<div class="t" style="left:403px;top:176px">5900</div>
<div class="t" style="left:503px;top:176px">0.0.0.0</div>
<div class="row" style="left:20px;top:193px;width:550px;background:#fff"></div>
<div class="gl" style="left:99px;top:193px"></div>
<div class="gl" style="left:199px;top:193px"></div>
<div class="gl" style="left:299px;top:193px"></div>
<div class="gl" style="left:399px;top:193px"></div>
<div class="gl" style="left:499px;top:193px"></div>
<svg class="a" style="left:23px;top:194px" width="16" height="13"><use href="#i-app"/></svg>
<div class="t" style="left:45px;top:193px">System</div>
<div class="t" style="left:103px;top:193px">UDP</div>
<div class="t" style="left:203px;top:193px">Open</div>
<div class="t" style="left:303px;top:193px">10.70.10.22</div>
<div class="t" style="left:403px;top:193px">137</div>
<div class="t" style="left:503px;top:193px"></div>
<div class="sb" style="left:0px;top:204px;width:571px;height:17px"></div>
<div class="sb" style="left:571px;top:0;width:17px;height:222px"></div>
<div class="thumb" style="left:17px;top:212px;width:304px;height:2px"></div>
<div class="thumb" style="left:578px;top:17px;width:2px;height:20px"></div>
</div>
<div class="tab" style="left:518px;top:505px;width:118px;height:21px;line-height:21px">Job</div>
<div class="tab" style="left:635px;top:505px;width:117px;height:21px;line-height:21px">.NET</div>
<div class="tab" style="left:751px;top:505px;width:120px;height:21px;line-height:21px">GDI</div>
<div class="tab" style="left:870px;top:505px;width:118px;height:21px;line-height:21px">Debug</div>
<div class="tab" style="left:987px;top:505px;width:117px;height:21px;line-height:21px">Sandboxie</div>
<div class="tab" style="left:518px;top:526px;width:59px;height:20px;line-height:18px">General</div>
<div class="tab" style="left:576px;top:526px;width:46px;height:20px;line-height:18px">Files</div>
<div class="tab" style="left:621px;top:526px;width:63px;height:20px;line-height:18px">Handles</div>
<div class="tab" style="left:683px;top:526px;width:61px;height:20px;line-height:18px">Sockets</div>
<div class="tab sel" style="left:743px;top:524px;width:67px;height:22px;line-height:20px">Threads</div>
<div class="tab" style="left:809px;top:526px;width:63px;height:20px;line-height:18px">Modules</div>
<div class="tab" style="left:871px;top:526px;width:68px;height:20px;line-height:18px">Windows</div>
<div class="tab" style="left:938px;top:526px;width:63px;height:20px;line-height:18px">Memory</div>
<div class="tab" style="left:1000px;top:526px;width:50px;height:20px;line-height:18px">Heap</div>
<div class="tab" style="left:1049px;top:526px;width:55px;height:20px;line-height:18px">Token</div>
<div class="frame" style="left:518px;top:546px;width:589px;height:225px">
<div class="hdr" style="left:4px;top:4px">Thread</div>
<div class="hdr" style="left:104px;top:4px">CPU</div>
<div class="hdr" style="left:204px;top:4px">CPU graph</div>
<div class="hdr" style="left:304px;top:4px">Start address</div>
<div class="hdr" style="left:404px;top:4px">Service</div>
<div class="hdr" style="left:504px;top:4px">Type</div>
<div class="a" style="left:99px;top:0;width:1px;height:23px;background:#e5e5e5"></div>
<div class="a" style="left:199px;top:0;width:1px;height:23px;background:#e5e5e5"></div>
<div class="a" style="left:299px;top:0;width:1px;height:23px;background:#e5e5e5"></div>
<div class="a" style="left:399px;top:0;width:1px;height:23px;background:#e5e5e5"></div>
<div class="a" style="left:499px;top:0;width:1px;height:23px;background:#e5e5e5"></div>
<svg class="a" style="left:45px;top:0px" width="10" height="6"><path d="M0.5 0.5 L5 5 L9.5 0.5" fill="none" stroke="#a0a0a0"/></svg>
<div class="row" style="left:20px;top:23px;width:567px;background:#fff"></div>
<div class="gl" style="left:99px;top:23px"></div>
<div class="gl" style="left:199px;top:23px"></div>
<div class="gl" style="left:299px;top:23px"></div>
<div class="gl" style="left:399px;top:23px"></div>
<div class="gl" style="left:499px;top:23px"></div>
<div class="t sx" style="left:23px;top:23px;">39284 [0x99...</div>
<div class="t" style="left:303px;top:23px;">ntdll.dll!TpCallb...</div>
<div class="t" style="left:503px;top:23px;">Normal</div>
<div class="row" style="left:20px;top:40px;width:567px;background:#aaccff"></div>
<div class="a" style="left:200px;top:40px;width:99px;height:16px;background:#fff"></div>
<div class="gl" style="left:99px;top:40px"></div>
<div class="gl" style="left:199px;top:40px"></div>
<div class="gl" style="left:299px;top:40px"></div>
<div class="gl" style="left:399px;top:40px"></div>
<div class="gl" style="left:499px;top:40px"></div>
<div class="t sx" style="left:23px;top:40px;">38672 [0x97...</div>
<div class="t" style="left:303px;top:40px;">GdiPlus.dll!Gdip...</div>
<div class="t" style="left:503px;top:40px;">GUI</div>
<div class="row" style="left:20px;top:57px;width:567px;background:#fff"></div>
<div class="gl" style="left:99px;top:57px"></div>
<div class="gl" style="left:199px;top:57px"></div>
<div class="gl" style="left:299px;top:57px"></div>
<div class="gl" style="left:399px;top:57px"></div>
<div class="gl" style="left:499px;top:57px"></div>
<div class="t sx" style="left:23px;top:57px;">32696 [0x7f...</div>
<div class="t" style="left:303px;top:57px;">sti.dll+0xc090</div>
<div class="t" style="left:503px;top:57px;">Normal</div>
<div class="row" style="left:20px;top:74px;width:567px;background:#0078d7"></div>
<div class="a" style="left:200px;top:74px;width:99px;height:16px;background:#fff"></div>
<div class="gl" style="left:99px;top:74px"></div>
<div class="gl" style="left:199px;top:74px"></div>
<div class="gl" style="left:299px;top:74px"></div>
<div class="gl" style="left:399px;top:74px"></div>
<div class="gl" style="left:499px;top:74px"></div>
<div class="t sx" style="left:23px;top:74px;color:#fff;font-weight:bold;">31272 [0x...</div>
<div class="t" style="left:103px;top:74px;color:#fff;">0.02%</div>
<div class="t" style="left:303px;top:74px;color:#fff;">mspaint1.exe+0...</div>
<div class="t" style="left:503px;top:74px;color:#fff;">Main</div>
<div class="row" style="left:20px;top:91px;width:567px;background:#fff"></div>
<div class="gl" style="left:99px;top:91px"></div>
<div class="gl" style="left:199px;top:91px"></div>
<div class="gl" style="left:299px;top:91px"></div>
<div class="gl" style="left:399px;top:91px"></div>
<div class="gl" style="left:499px;top:91px"></div>
<div class="t sx" style="left:23px;top:91px;">14576 [0x38f0]</div>
<div class="t" style="left:303px;top:91px;">ntdll.dll!TpCallb...</div>
<div class="t" style="left:503px;top:91px;">Normal</div>
<div class="row" style="left:20px;top:108px;width:567px;background:#fff"></div>
<div class="gl" style="left:99px;top:108px"></div>
<div class="gl" style="left:199px;top:108px"></div>
<div class="gl" style="left:299px;top:108px"></div>
<div class="gl" style="left:399px;top:108px"></div>
<div class="gl" style="left:499px;top:108px"></div>
<div class="t sx" style="left:23px;top:108px;">11908 [0x2e...</div>
<div class="t" style="left:303px;top:108px;">ntdll.dll!TpCallb...</div>
<div class="t" style="left:503px;top:108px;">Normal</div>
<div class="row" style="left:20px;top:125px;width:567px;background:#fff"></div>
<div class="gl" style="left:99px;top:125px"></div>
<div class="gl" style="left:199px;top:125px"></div>
<div class="gl" style="left:299px;top:125px"></div>
<div class="gl" style="left:399px;top:125px"></div>
<div class="gl" style="left:499px;top:125px"></div>
<div class="t sx" style="left:23px;top:125px;">10696 [0x29...</div>
<div class="t" style="left:303px;top:125px;">ntdll.dll!TpCallb...</div>
<div class="t" style="left:503px;top:125px;">Normal</div>
<div class="row" style="left:20px;top:142px;width:567px;background:#fff"></div>
<div class="gl" style="left:99px;top:142px"></div>
<div class="gl" style="left:199px;top:142px"></div>
<div class="gl" style="left:299px;top:142px"></div>
<div class="gl" style="left:399px;top:142px"></div>
<div class="gl" style="left:499px;top:142px"></div>
<div class="t sx" style="left:23px;top:142px;">8380 [0x20bc]</div>
<div class="t" style="left:303px;top:142px;">combase.dll!CS...</div>
<div class="t" style="left:503px;top:142px;">Normal</div>
<div class="row" style="left:20px;top:159px;width:567px;background:#fff"></div>
<div class="gl" style="left:99px;top:159px"></div>
<div class="gl" style="left:199px;top:159px"></div>
<div class="gl" style="left:299px;top:159px"></div>
<div class="gl" style="left:399px;top:159px"></div>
<div class="gl" style="left:499px;top:159px"></div>
<div class="t sx" style="left:23px;top:159px;">1324 [0x52c]</div>
<div class="t" style="left:303px;top:159px;">ntdll.dll!TpCallb...</div>
<div class="t" style="left:503px;top:159px;">Normal</div>
<div class="a" style="left:20px;top:74px;width:79px;height:16px;border:1px dotted #e8a050"></div>
<div class="sb" style="left:0;top:208px;width:588px;height:16px"></div>
<div class="thumb" style="left:17px;top:215px;width:359px;height:2px"></div>
</div>
<div class="frame" style="left:518px;top:776px;width:589px;height:489px">
<div class="hdr" style="left:4px;top:5px">#</div>
<div class="hdr" style="left:104px;top:5px">Symbol</div>
<div class="hdr" style="left:459px;top:5px">Stack address</div>
<div class="hdr" style="left:559px;top:5px">Frame address</div>
<div class="a" style="left:99px;top:0;width:1px;height:24px;background:#e5e5e5"></div>
<div class="a" style="left:454px;top:0;width:1px;height:24px;background:#e5e5e5"></div>
<div class="a" style="left:554px;top:0;width:1px;height:24px;background:#e5e5e5"></div>
<div class="row" style="left:20px;top:24px;width:551px;background:#fff"></div>
<div class="gl" style="left:99px;top:24px"></div>
<div class="gl" style="left:454px;top:24px"></div>
<div class="gl" style="left:554px;top:24px"></div>
<div class="t" style="left:23px;top:24px">0</div>
<div class="t" style="left:103px;top:24px">ntoskrnl.exe!PsIsThreadTerminating+0x100a</div>
<div class="t sx9" style="left:458px;top:24px">0x000000000000...</div>
<div class="t" style="left:558px;top:24px">0x00</div>
<div class="row" style="left:20px;top:41px;width:551px;background:#fff"></div>
<div class="gl" style="left:99px;top:41px"></div>
<div class="gl" style="left:454px;top:41px"></div>
<div class="gl" style="left:554px;top:41px"></div>
<div class="t" style="left:23px;top:41px">1</div>
<div class="t" style="left:103px;top:41px">ntoskrnl.exe!KeWaitForMultipleObjects+0x34d5</div>
<div class="t sx9" style="left:458px;top:41px">0x000000000000...</div>
<div class="t" style="left:558px;top:41px">0x00</div>
<div class="row" style="left:20px;top:58px;width:551px;background:#fff"></div>
<div class="gl" style="left:99px;top:58px"></div>
<div class="gl" style="left:454px;top:58px"></div>
<div class="gl" style="left:554px;top:58px"></div>
<div class="t" style="left:23px;top:58px">2</div>
<div class="t" style="left:103px;top:58px">ntoskrnl.exe!KeWaitForMultipleObjects+0x2170</div>
<div class="t sx9" style="left:458px;top:58px">0x000000000000...</div>
<div class="t" style="left:558px;top:58px">0x00</div>
<div class="row" style="left:20px;top:75px;width:551px;background:#fff"></div>
<div class="gl" style="left:99px;top:75px"></div>
<div class="gl" style="left:454px;top:75px"></div>
<div class="gl" style="left:554px;top:75px"></div>
<div class="t" style="left:23px;top:75px">3</div>
<div class="t" style="left:103px;top:75px">ntoskrnl.exe!KeWaitForMutexObject+0x7a4</div>
<div class="t sx9" style="left:458px;top:75px">0x000000000000...</div>
<div class="t" style="left:558px;top:75px">0x00</div>
<div class="row" style="left:20px;top:92px;width:551px;background:#fff"></div>
<div class="gl" style="left:99px;top:92px"></div>
<div class="gl" style="left:454px;top:92px"></div>
<div class="gl" style="left:554px;top:92px"></div>
<div class="t" style="left:23px;top:92px">4</div>
<div class="t" style="left:103px;top:92px">ntoskrnl.exe!KeWaitForMultipleObjects+0xa8</div>
<div class="t sx9" style="left:458px;top:92px">0x000000000000...</div>
<div class="t" style="left:558px;top:92px">0x00</div>
<div class="row" style="left:20px;top:109px;width:551px;background:#fff"></div>
<div class="gl" style="left:99px;top:109px"></div>
<div class="gl" style="left:454px;top:109px"></div>
<div class="gl" style="left:554px;top:109px"></div>
<div class="t" style="left:23px;top:109px">5</div>
<div class="t" style="left:103px;top:109px">win32kfull.sys!zzzUpdateCursorImage+0xa3a</div>
<div class="t sx9" style="left:458px;top:109px">0x000000000000...</div>
<div class="t" style="left:558px;top:109px">0x00</div>
<div class="row" style="left:20px;top:126px;width:551px;background:#fff"></div>
<div class="gl" style="left:99px;top:126px"></div>
<div class="gl" style="left:454px;top:126px"></div>
<div class="gl" style="left:554px;top:126px"></div>
<div class="t" style="left:23px;top:126px">6</div>
<div class="t" style="left:103px;top:126px">win32kfull.sys!zzzUpdateCursorImage+0x5f7</div>
<div class="t sx9" style="left:458px;top:126px">0x000000000000...</div>
<div class="t" style="left:558px;top:126px">0x00</div>
<div class="row" style="left:20px;top:143px;width:551px;background:#fff"></div>
<div class="gl" style="left:99px;top:143px"></div>
<div class="gl" style="left:454px;top:143px"></div>
<div class="gl" style="left:554px;top:143px"></div>
<div class="t" style="left:23px;top:143px">7</div>
<div class="t" style="left:103px;top:143px">win32kfull.sys!NtUserPeekMessage+0xec6</div>
<div class="t sx9" style="left:458px;top:143px">0x000000000000...</div>
<div class="t" style="left:558px;top:143px">0x00</div>
<div class="row" style="left:20px;top:160px;width:551px;background:#fff"></div>
<div class="gl" style="left:99px;top:160px"></div>
<div class="gl" style="left:454px;top:160px"></div>
<div class="gl" style="left:554px;top:160px"></div>
<div class="t" style="left:23px;top:160px">8</div>
<div class="t" style="left:103px;top:160px">win32kfull.sys!NtUserPeekMessage+0x22d</div>
<div class="t sx9" style="left:458px;top:160px">0x000000000000...</div>
<div class="t" style="left:558px;top:160px">0x00</div>
<div class="row" style="left:20px;top:177px;width:551px;background:#fff"></div>
<div class="gl" style="left:99px;top:177px"></div>
<div class="gl" style="left:454px;top:177px"></div>
<div class="gl" style="left:554px;top:177px"></div>
<div class="t" style="left:23px;top:177px">9</div>
<div class="t" style="left:103px;top:177px">win32kfull.sys!NtUserGetMessage+0x72</div>
<div class="t sx9" style="left:458px;top:177px">0x000000000000...</div>
<div class="t" style="left:558px;top:177px">0x00</div>
<div class="row" style="left:20px;top:194px;width:551px;background:#fff"></div>
<div class="gl" style="left:99px;top:194px"></div>
<div class="gl" style="left:454px;top:194px"></div>
<div class="gl" style="left:554px;top:194px"></div>
<div class="t" style="left:23px;top:194px">10</div>
<div class="t" style="left:103px;top:194px">win32k.sys+0x1857</div>
<div class="t sx9" style="left:458px;top:194px">0x000000000000...</div>
<div class="t" style="left:558px;top:194px">0x00</div>
<div class="row" style="left:20px;top:211px;width:551px;background:#fff"></div>
<div class="gl" style="left:99px;top:211px"></div>
<div class="gl" style="left:454px;top:211px"></div>
<div class="gl" style="left:554px;top:211px"></div>
<div class="t" style="left:23px;top:211px">11</div>
<div class="t" style="left:103px;top:211px">ntoskrnl.exe!setjmpex+0x92a8</div>
<div class="t sx9" style="left:458px;top:211px">0x000000000000...</div>
<div class="t" style="left:558px;top:211px">0x00</div>
<div class="row" style="left:20px;top:228px;width:551px;background:#fff"></div>
<div class="gl" style="left:99px;top:228px"></div>
<div class="gl" style="left:454px;top:228px"></div>
<div class="gl" style="left:554px;top:228px"></div>
<div class="t" style="left:23px;top:228px">12</div>
<div class="t" style="left:103px;top:228px">wow64win.dll!NtWow64UserConnectHook+0x278c4</div>
<div class="t sx9" style="left:458px;top:228px">0x0000000002a8...</div>
<div class="t" style="left:558px;top:228px">0x00</div>
<div class="row" style="left:20px;top:245px;width:551px;background:#fff"></div>
<div class="gl" style="left:99px;top:245px"></div>
<div class="gl" style="left:454px;top:245px"></div>
<div class="gl" style="left:554px;top:245px"></div>
<div class="t" style="left:23px;top:245px">13</div>
<div class="t" style="left:103px;top:245px">wow64win.dll+0x6e60</div>
<div class="t sx9" style="left:458px;top:245px">0x0000000002a8...</div>
<div class="t" style="left:558px;top:245px">0x00</div>
<div class="row" style="left:20px;top:262px;width:551px;background:#fff"></div>
<div class="gl" style="left:99px;top:262px"></div>
<div class="gl" style="left:454px;top:262px"></div>
<div class="gl" style="left:554px;top:262px"></div>
<div class="t" style="left:23px;top:262px">14</div>
<div class="t" style="left:103px;top:262px">wow64.dll!Wow64SystemServiceEx+0x18c</div>
<div class="t sx9" style="left:458px;top:262px">0x0000000002a8...</div>
<div class="t" style="left:558px;top:262px">0x00</div>
<div class="row" style="left:20px;top:279px;width:551px;background:#fff"></div>
<div class="gl" style="left:99px;top:279px"></div>
<div class="gl" style="left:454px;top:279px"></div>
<div class="gl" style="left:554px;top:279px"></div>
<div class="t" style="left:23px;top:279px">15</div>
<div class="t" style="left:103px;top:279px">wow64cpu.dll!TurboDispatchJumpAddressEnd+0xb</div>
<div class="t sx9" style="left:458px;top:279px">0x0000000002a8...</div>
<div class="t" style="left:558px;top:279px">0x00</div>
<div class="row" style="left:20px;top:296px;width:551px;background:#fff"></div>
<div class="gl" style="left:99px;top:296px"></div>
<div class="gl" style="left:454px;top:296px"></div>
<div class="gl" style="left:554px;top:296px"></div>
<div class="t" style="left:23px;top:296px">16</div>
<div class="t" style="left:103px;top:296px">wow64cpu.dll!BTCpuSimulate+0x9</div>
<div class="t sx9" style="left:458px;top:296px">0x0000000002a8...</div>
<div class="t" style="left:558px;top:296px">0x00</div>
<div class="row" style="left:20px;top:313px;width:551px;background:#fff"></div>
<div class="gl" style="left:99px;top:313px"></div>
<div class="gl" style="left:454px;top:313px"></div>
<div class="gl" style="left:554px;top:313px"></div>
<div class="t" style="left:23px;top:313px">17</div>
<div class="t" style="left:103px;top:313px">wow64.dll!Wow64FreeThreadHeap+0x12ad</div>
<div class="t sx9" style="left:458px;top:313px">0x0000000002a8...</div>
<div class="t" style="left:558px;top:313px">0x00</div>
<div class="row" style="left:20px;top:330px;width:551px;background:#fff"></div>
<div class="gl" style="left:99px;top:330px"></div>
<div class="gl" style="left:454px;top:330px"></div>
<div class="gl" style="left:554px;top:330px"></div>
<div class="t" style="left:23px;top:330px">18</div>
<div class="t" style="left:103px;top:330px">wow64.dll!Wow64LdrpInitialize+0x38c</div>
<div class="t sx9" style="left:458px;top:330px">0x0000000002a8...</div>
<div class="t" style="left:558px;top:330px">0x00</div>
<div class="row" style="left:20px;top:347px;width:551px;background:#fff"></div>
<div class="gl" style="left:99px;top:347px"></div>
<div class="gl" style="left:454px;top:347px"></div>
<div class="gl" style="left:554px;top:347px"></div>
<div class="t" style="left:23px;top:347px">19</div>
<div class="t" style="left:103px;top:347px">ntdll.dll!EtwEventWriteNoRegistration+0x1ef8</div>
<div class="t sx9" style="left:458px;top:347px">0x0000000002a8...</div>
<div class="t" style="left:558px;top:347px">0x00</div>
<div class="row" style="left:20px;top:364px;width:551px;background:#fff"></div>
<div class="gl" style="left:99px;top:364px"></div>
<div class="gl" style="left:454px;top:364px"></div>
<div class="gl" style="left:554px;top:364px"></div>
<div class="t" style="left:23px;top:364px">20</div>
<div class="t" style="left:103px;top:364px">ntdll.dll!EtwEventWriteNoRegistration+0x490</div>
<div class="t sx9" style="left:458px;top:364px">0x0000000002a8...</div>
<div class="t" style="left:558px;top:364px">0x00</div>
<div class="row" style="left:20px;top:381px;width:551px;background:#fff"></div>
<div class="gl" style="left:99px;top:381px"></div>
<div class="gl" style="left:454px;top:381px"></div>
<div class="gl" style="left:554px;top:381px"></div>
<div class="t" style="left:23px;top:381px">21</div>
<div class="t" style="left:103px;top:381px">ntdll.dll!RtlCrc32+0x4b3</div>
<div class="t sx9" style="left:458px;top:381px">0x0000000002a8...</div>
<div class="t" style="left:558px;top:381px">0x00</div>
<div class="row" style="left:20px;top:398px;width:551px;background:#fff"></div>
<div class="gl" style="left:99px;top:398px"></div>
<div class="gl" style="left:454px;top:398px"></div>
<div class="gl" style="left:554px;top:398px"></div>
<div class="t" style="left:23px;top:398px">22</div>
<div class="t" style="left:103px;top:398px">ntdll.dll!LdrInitializeThunk+0xe</div>
<div class="t sx9" style="left:458px;top:398px">0x0000000002a8...</div>
<div class="t" style="left:558px;top:398px">0x00</div>
<div class="row" style="left:20px;top:415px;width:551px;background:#fff"></div>
<div class="gl" style="left:99px;top:415px"></div>
<div class="gl" style="left:454px;top:415px"></div>
<div class="gl" style="left:554px;top:415px"></div>
<div class="t" style="left:23px;top:415px">23</div>
<div class="t" style="left:103px;top:415px">win32u.dll!NtUserGetMessage+0xc (No unwind info)</div>
<div class="t sx9" style="left:458px;top:415px">0x0000000002ac...</div>
<div class="t" style="left:558px;top:415px">0x00</div>
<div class="row" style="left:20px;top:432px;width:551px;background:#fff"></div>
<div class="gl" style="left:99px;top:432px"></div>
<div class="gl" style="left:454px;top:432px"></div>
<div class="gl" style="left:554px;top:432px"></div>
<div class="t" style="left:23px;top:432px">24</div>
<div class="t" style="left:103px;top:432px">mfc42u.dll!Ordinal5303+0x15 (No unwind info)</div>
<div class="t sx9" style="left:458px;top:432px">0x0000000002ac...</div>
<div class="t" style="left:558px;top:432px">0x00</div>
<div class="row" style="left:20px;top:449px;width:551px;background:#fff"></div>
<div class="gl" style="left:99px;top:449px"></div>
<div class="gl" style="left:454px;top:449px"></div>
<div class="gl" style="left:554px;top:449px"></div>
<div class="t" style="left:23px;top:449px">25</div>
<div class="t" style="left:103px;top:449px">mfc42u.dll!Ordinal1569+0xa2 (No unwind info)</div>
<div class="t sx9" style="left:458px;top:449px">0x0000000002ac...</div>
<div class="t" style="left:558px;top:449px">0x00</div>
<div class="sb" style="left:571px;top:0;width:17px;height:488px"></div>
<div class="sb" style="left:0;top:470px;width:588px;height:17px"></div>
<div class="thumb" style="left:17px;top:478px;width:289px;height:2px"></div>
<div class="thumb" style="left:579px;top:18px;width:2px;height:376px"></div>
</div>
<div class="a" style="left:0;top:1268px;width:1112px;height:1px;background:#fff"></div>
<div class="t" style="left:394px;top:1271px;transform:scaleX(0.955);transform-origin:0 0">CPU: 5%</div>
<div class="t" style="left:457px;top:1271px;transform:scaleX(0.955);transform-origin:0 0">GPU-0: 0%</div>
<div class="t" style="left:531px;top:1271px;transform:scaleX(0.975);transform-origin:0 0">Memory: 8.12 GB/9.38 GB/(32.00 GB + 4.75 GB)</div>
<div class="t" style="left:794px;top:1271px;transform:scaleX(0.955);transform-origin:0 0">R: 868.86 KB/s W: 857.24 KB/s</div>
<div class="t" style="left:966px;top:1271px;transform:scaleX(0.955);transform-origin:0 0">D: 282.27 KB/s U: 0B/s</div>
<div class="a" style="left:452px;top:1271px;width:1px;height:16px;background:#d0d0d0"></div>
<div class="a" style="left:525px;top:1271px;width:1px;height:16px;background:#d0d0d0"></div>
<div class="a" style="left:788px;top:1271px;width:1px;height:16px;background:#d0d0d0"></div>
<div class="a" style="left:960px;top:1271px;width:1px;height:16px;background:#d0d0d0"></div>
<div class="a" style="left:1092px;top:1271px;width:1px;height:16px;background:#d0d0d0"></div>
<svg class="a" style="left:1101px;top:1280px" width="8" height="8"><g fill="#a8a8a8"><rect x="6" y="0" width="2" height="2"/><rect x="3" y="3" width="2" height="2"/><rect x="6" y="3" width="2" height="2"/><rect x="0" y="6" width="2" height="2"/><rect x="3" y="6" width="2" height="2"/><rect x="6" y="6" width="2" height="2"/></g></svg>
</body></html>
